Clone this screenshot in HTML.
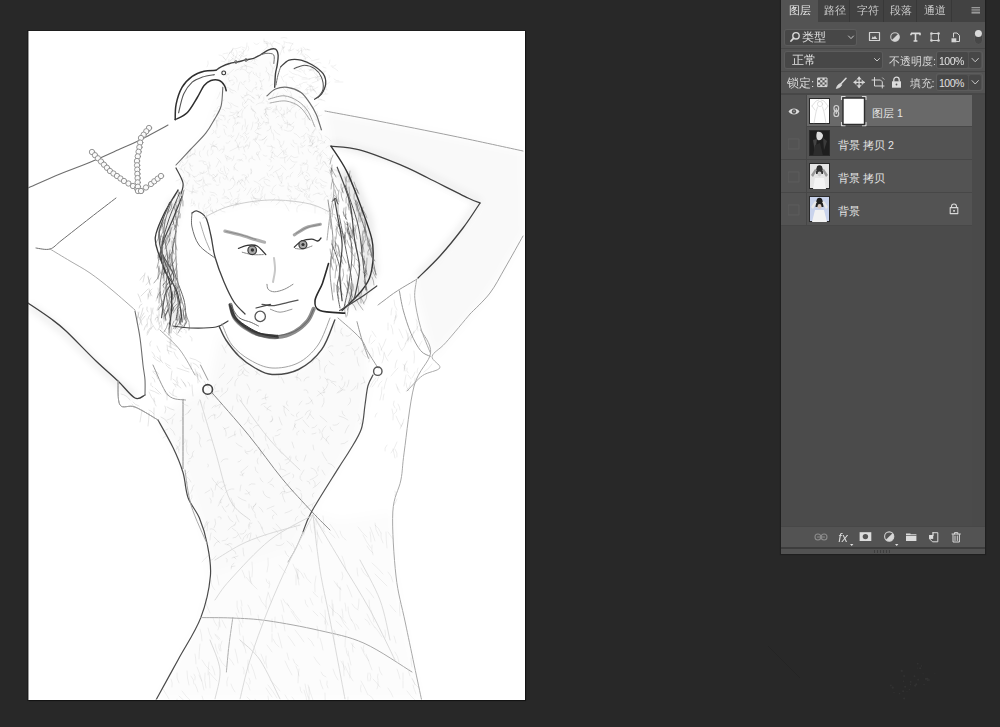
<!DOCTYPE html>
<html><head><meta charset="utf-8">
<style>
*{margin:0;padding:0;box-sizing:border-box}
html,body{width:1000px;height:727px;overflow:hidden;background:#282828;font-family:"Liberation Sans",sans-serif}
.a{position:absolute}
#canvas{left:28px;top:31px;width:496.5px;height:668.6px;background:#fff;box-shadow:0 0 0 1px rgba(0,0,0,.25),1px 1px 1px rgba(0,0,0,.35),inset 1px 0 0 rgba(0,0,0,.4)}
#panel{left:781px;top:0;width:204px;height:554.4px;background:#535353;box-shadow:0 0 1px 1px rgba(0,0,0,.22)}
.tabbar{left:0;top:0;width:204px;height:22px;background:#424242}
.tab{top:0;height:22px;font-size:10.5px;line-height:21px;padding-left:2px;color:#c8c8c8;text-align:center;border-right:1px solid #383838}
.tab.act{background:#535353;color:#e8e8e8;border-right:none;padding-left:0}
.field{background:#464646;border:1px solid #4c4c4c;border-radius:2px}
.txt{font-size:11px;color:#e0e0e0;white-space:nowrap;line-height:12px}
.ring{border-radius:3px;box-shadow:inset 0 0 0 1px #5c5c5c;background:#535353}
.inb{background:#474747;border-radius:2px}
.sep{left:0;width:204px;height:1px;background:#474747}
.row{left:0;width:191px;height:33px;background:#535353;border-bottom:1px solid #474747}
.row.sel{background:#696969}
.eyecol{left:0;top:0;width:26px;height:32px;background:#535353;border-right:1px solid #474747}
.thumb{left:28px;top:3px;width:21px;height:26px;border:1px solid #2a2a2a;background:#fff}
.lname{left:57px;top:11.5px;font-size:10.6px;color:#e6e6e6;white-space:nowrap;line-height:12px}
</style></head><body>
<div id="canvas" class="a"></div>
<svg class="a" style="left:0;top:0" width="1000" height="727" viewBox="0 0 1000 727">
<defs>
<clipPath id="cc"><rect x="28" y="31" width="496.5" height="668.6"/></clipPath>
<filter id="bl" x="-20%" y="-20%" width="140%" height="140%"><feGaussianBlur stdDeviation="5"/></filter>
<filter id="bl3" x="-20%" y="-20%" width="140%" height="140%"><feGaussianBlur stdDeviation="3"/></filter>
<filter id="sf" x="-5%" y="-5%" width="110%" height="110%"><feGaussianBlur stdDeviation="0.4"/></filter>
</defs>
<g clip-path="url(#cc)">
<g filter="url(#bl)" fill="#000">
  <path d="M176 165 L205 133 L222 87 L216 70 L245 60 L275 49 L278 56 L275 86 L300 92 L320 125 L331 146 L335 180 L335 215 L300 205 L250 203 L200 215 L186 195Z" opacity="0.012"/>
  <path d="M183 399 L208 389 L220 332 L240 356 L272 374 L298 369 L322 350 L335 320 L365 340 L368 390 L360 430 L338 468 L312 511 L290 550 L210 576 L207 544 L199 518 L183 468 L173 447 L158 420Z" opacity="0.02"/>
  <path d="M210 576 L290 550 L312 511 L340 520 L392 512 L396 576 L405 624 L421 699 L156 699 L178 659 L200 618Z" opacity="0.012"/>
  <path d="M325 111 L523 151 L525 232 L499 276 L483 300 L433 358 L413 280 L446 250 L481 204 L400 165 L331 146 Z" opacity="0.025"/>
</g>
<g filter="url(#bl3)" fill="none" stroke="#000">
  <path d="M30 306 L66 334 L96 364 L118 383 L135 396" stroke-width="7" opacity="0.06"/>
  <path d="M333 143 L390 158 L428 175 L478 201 L460 228 L440 253 L418 275" stroke-width="6" opacity="0.05"/>
  <path d="M176 200 L166 240 L170 290 L176 322" stroke-width="12" opacity="0.08"/>
  <path d="M345 170 L365 220 L370 270 L352 305" stroke-width="16" opacity="0.08"/>
</g>
<g fill="none" stroke-linecap="round" filter="url(#sf)" stroke="#000">
<path d="M227 74Q227 76 226 77 M245 61Q247 63 250 62 M268 115Q266 113 265 116 M222 73Q223 76 226 75 M205 146Q204 148 203 150 M209 162Q209 164 210 166 M248 99Q247 102 244 104 M267 136Q265 139 262 140 M242 175Q246 174 247 177 M282 176Q283 180 281 184 M287 148Q284 150 286 153 M288 156Q284 159 280 158 M237 160Q240 158 243 161 M215 114Q214 115 213 116 M263 196Q262 199 258 201 M242 109Q240 113 235 113 M213 130Q216 132 212 134 M243 110Q241 114 242 118 M258 152Q255 152 257 155 M300 194Q299 196 297 198 M192 154Q195 153 196 155 M315 151Q317 151 319 153 M234 69Q231 72 227 75 M253 63Q256 63 257 65 M260 73Q260 75 260 76 M332 192Q331 195 330 196 M203 177Q204 181 203 184 M211 184Q207 183 204 186 M306 172Q309 173 310 176 M220 92Q219 96 217 99 M275 198Q273 200 271 202 M281 200Q279 203 276 205 M204 180Q204 185 208 186 M239 116Q237 119 233 118 M320 183Q322 187 326 186 M281 107Q283 109 280 111 M330 157Q331 161 330 165 M315 186Q317 187 318 189 M214 146Q218 147 218 150 M249 146Q245 145 244 148 M256 137Q256 139 256 140 M251 169Q251 172 251 174 M264 179Q268 179 270 181 M220 177Q219 180 220 183 M273 133Q274 136 274 140 M261 128Q257 128 255 131 M188 160Q187 164 183 166 M290 159Q292 163 297 162 M211 207Q209 211 213 212 M245 135Q247 136 247 138 M264 122Q266 123 269 123 M257 60Q253 58 251 62 M182 178Q184 179 185 181 M321 185Q320 188 324 188 M267 165Q268 167 270 166 M244 61Q240 61 238 64 M189 191Q193 192 197 193 M230 141Q229 144 226 143 M260 89Q263 87 263 90 M224 175Q228 176 228 180 M293 140Q293 144 297 144 M193 185Q192 188 194 190 M239 133Q238 137 235 141 M308 166Q308 169 307 171 M187 172Q190 172 190 175 M310 194Q310 196 308 198 M223 125Q226 125 227 128 M329 210Q326 212 329 215 M225 108Q228 108 230 109 M256 82Q257 84 256 85 M224 88Q222 90 223 93 M281 168Q279 170 276 171 M291 156Q294 159 298 157 M276 171Q274 172 273 173 M256 188Q253 190 251 193 M318 162Q320 165 316 166 M193 188Q192 191 192 194 M284 130Q288 132 291 131 M256 138Q254 139 255 141 M218 170Q219 174 224 174 M255 113Q253 116 256 119 M274 156Q276 155 278 157 M294 100Q297 101 294 103 M219 161Q218 164 216 167 M258 126Q256 128 259 130 M208 211Q206 212 205 213 M247 94Q252 95 254 99 M268 73Q271 77 269 81 M306 133Q304 137 301 137 M319 130Q320 130 322 130 M248 99Q250 99 252 101 M295 188Q298 191 303 192 M235 114Q232 116 229 116 M244 95Q245 97 248 95 M221 204Q223 206 225 207 M328 196Q324 196 324 200 M326 140Q324 141 324 143 M248 174Q250 177 246 178 M251 106Q251 111 255 112 M217 158Q220 160 221 163 M209 199Q207 202 209 204 M217 144Q214 146 211 147 M242 136Q245 137 244 140 M220 210Q222 212 225 212 M240 123Q235 122 233 126 M289 198Q292 200 290 204 M238 203Q234 203 233 208 M291 156Q289 158 287 161 M182 179Q185 182 188 184 M224 70Q226 73 229 75 M259 146Q260 148 261 150 M278 196Q280 198 279 200 M329 166Q330 167 331 169 M283 119Q284 123 288 123 M230 119Q227 120 228 123 M294 133Q297 134 300 138 M211 175Q214 178 216 182 M242 159Q241 161 239 161 M210 211Q213 209 213 212 M239 198Q234 198 233 202 M205 204Q204 205 204 207 M236 111Q240 111 238 114 M220 107Q218 105 217 109 M307 185Q307 187 308 189 M235 202Q236 205 239 205 M305 176Q307 174 308 177 M295 198Q294 201 297 202 M274 93Q274 95 272 97 M322 154Q321 156 319 156 M216 120Q218 124 217 128 M304 172Q301 174 298 177 M228 102Q232 104 231 108 M207 174Q211 173 210 176 M264 103Q259 102 256 105 M289 123Q290 126 293 127 M283 173Q282 177 278 177 M266 111Q266 113 264 114 M317 145Q315 149 319 149 M257 87Q252 88 252 92 M306 189Q305 190 303 190 M331 146Q327 145 326 148 M247 92Q247 97 242 98 M271 152Q274 152 275 155 M271 157Q273 157 274 159 M226 83Q226 87 222 87 M263 155Q265 157 267 156 M241 96Q244 99 246 103 M266 108Q264 113 268 116 M234 82Q235 85 232 85 M306 116Q305 120 302 119 M278 200Q281 200 284 202 M256 73Q256 77 260 78 M326 211Q324 213 326 214 M238 199Q239 203 236 206 M240 189Q240 192 237 192 M240 135Q242 136 241 138 M291 198Q294 200 297 199 M195 149Q196 152 194 155 M243 146Q244 149 245 152 M274 130Q276 134 280 135 M249 79Q251 80 249 82 M244 64Q248 66 246 70 M277 63Q275 66 273 69 M198 191Q194 190 191 193 M207 212Q205 216 208 220 M202 180Q201 181 199 181 M256 202Q258 203 259 204 M325 162Q322 161 322 164 M277 109Q274 110 272 112 M239 181Q241 185 244 188 M233 176Q232 178 234 180 M184 185Q184 189 188 190 M269 159Q272 159 271 162 M200 151Q198 155 201 157 M212 146Q211 148 211 150 M252 71Q250 74 248 73 M191 155Q189 158 185 159 M279 142Q280 145 282 148 M325 171Q330 172 331 176 M261 116Q261 119 263 119 M208 150Q206 153 208 156 M317 179Q315 179 316 182 M294 126Q294 129 291 131 M295 164Q293 168 290 169 M264 121Q263 125 260 126 M211 195Q213 194 215 196 M295 103Q294 106 291 106 M320 154Q316 155 317 160 M251 188Q249 192 247 195 M291 144Q292 146 294 147 M193 203Q196 203 195 206 M183 164Q180 167 181 170 M234 185Q233 189 228 190 M314 201Q313 203 311 202 M311 184Q309 187 309 191 M192 175Q194 176 195 178 M221 168Q219 171 223 172 M256 190Q256 192 255 193 M245 177Q247 180 249 183 M210 192Q215 192 217 195 M254 181Q257 182 259 184 M210 165Q209 167 210 169 M189 180Q187 183 186 186 M233 116Q236 118 235 123 M319 132Q322 135 322 139 M249 137Q247 140 245 143 M231 103Q234 106 238 107 M246 177Q246 179 245 181 M288 189Q290 189 291 191 M228 136Q231 135 232 138 M331 170Q336 169 339 173 M302 171Q302 173 303 175 M239 180Q237 183 237 185 M250 73Q248 75 249 78 M267 173Q267 176 269 177 M316 177Q313 180 312 184 M278 124Q282 126 282 130 M243 179Q242 182 240 184 M243 125Q242 127 242 130 M280 178Q279 182 282 183 M202 179Q200 182 196 181 M267 139Q265 141 264 144 M308 136Q311 139 310 143 M285 114Q281 114 283 117 M220 115Q222 115 225 116 M287 107Q287 110 290 111 M325 136Q329 138 331 141 M299 183Q298 186 298 189 M212 209Q212 213 215 215 M306 127Q309 128 309 131 M309 108Q307 110 305 111 M216 120Q217 122 219 121 M224 129Q224 132 226 135 M234 203Q231 203 231 205 M320 179Q323 182 327 183 M327 158Q330 158 330 160 M213 178Q212 181 215 181 M318 150Q314 151 313 155 M301 188Q304 190 307 192 M294 122Q292 125 289 125 M254 59Q255 61 255 62 M255 139Q253 138 253 140 M250 142Q250 146 248 149 M188 155Q187 156 187 158 M285 204Q287 207 289 211 M253 198Q256 199 260 199 M230 192Q231 195 232 197 M245 119Q246 123 245 127 M308 116Q308 118 308 120 M331 158Q330 160 328 161 M224 146Q225 151 222 153 M291 196Q292 198 291 199 M323 150Q319 153 320 157 M273 151Q272 154 271 158 M282 125Q283 128 280 128 M182 178Q179 180 176 181 M307 180Q308 182 306 184 M243 102Q241 106 245 108 M305 145Q304 148 300 147 M238 147Q234 149 230 151 M242 66Q243 69 240 70 M179 168Q183 169 184 173 M184 177Q181 180 180 184 M189 153Q186 155 187 158 M216 209Q218 212 215 212 M279 185Q281 187 284 186 M202 192Q203 193 203 195 M267 122Q265 123 266 125 M234 156Q234 159 232 161 M301 143Q300 146 303 146 M288 186Q287 191 291 192 M308 149Q308 152 311 153 M236 163Q233 166 234 170 M218 119Q215 122 217 126 M305 193Q303 195 305 197 M304 163Q303 166 300 165 M264 181Q265 186 270 186 M213 150Q214 153 211 155 M217 174Q217 177 213 178 M304 177Q305 181 309 181 M317 136Q319 138 318 142 M287 109Q287 112 287 114 M193 154Q191 155 190 157 M231 135Q232 138 234 136 M314 130Q312 132 313 134 M298 185Q297 188 294 186 M265 194Q263 198 266 201 M239 69Q237 69 235 71 M282 114Q280 117 283 118 M232 199Q230 203 225 203 M301 167Q302 172 298 175 M199 174Q197 177 193 177 M270 175Q273 174 274 177 M199 161Q202 160 206 162 M211 204Q209 208 205 209 M247 65Q243 66 240 68 M248 105Q245 107 244 109 M185 167Q183 169 185 171 M218 117Q219 120 222 120 M229 77Q227 79 230 82 M252 97Q254 97 255 99 M222 198Q226 197 229 199 M304 106Q305 108 307 107 M260 80Q262 83 262 87 M267 72Q269 75 273 76 M190 150Q192 152 190 154 M273 166Q272 170 269 171 M186 171Q190 173 189 177 M305 105Q302 107 299 110 M252 194Q252 197 254 197 M234 76Q238 78 237 82 M259 123Q257 125 259 127 M306 193Q308 195 310 198 M315 207Q315 210 315 213 M216 185Q217 186 219 185 M271 145Q274 148 271 151 M314 168Q316 168 318 169 M256 95Q259 95 260 98 M270 192Q272 195 275 195 M202 186Q200 188 198 188 M310 136Q309 141 313 144 M230 89Q229 93 233 93 M304 201Q303 205 299 206 M243 154Q247 155 246 159 M245 133Q246 136 249 133 M299 205Q296 207 297 212 M278 93Q277 95 276 97 M323 152Q325 154 327 156 M225 156Q226 160 230 159 M258 94Q260 96 259 99 M223 116Q226 117 225 120 M263 188Q261 191 262 194 M208 167Q208 170 209 173 M251 101Q252 102 254 103 M237 146Q239 149 242 147 M214 141Q211 144 214 146 M223 177Q223 180 226 179 M238 122Q238 124 236 125 M329 172Q331 172 333 174 M283 151Q280 154 278 156 M293 172Q290 174 290 177 M289 201Q293 200 296 204 M298 146Q298 150 299 154 M242 179Q240 181 237 183 M248 125Q247 127 246 129 M264 113Q265 117 268 119 M255 123Q259 122 259 125 M267 146Q272 146 275 148 M310 188Q308 189 306 190 M255 202Q251 202 251 206 M258 135Q258 138 256 140 M271 107Q267 108 264 110 M240 142Q237 146 239 150 M253 122Q253 126 251 130 M260 184Q261 188 264 187 M307 134Q311 137 315 137 M257 133Q259 135 261 135 M272 108Q270 111 266 109 M241 180Q246 181 245 185 M224 189Q226 192 223 195 M255 141Q257 143 260 146 M241 69Q246 69 248 73 M259 186Q261 190 257 193 M227 168Q229 169 229 171 M192 199Q192 201 191 204 M318 146Q315 146 313 148 M324 191Q325 195 328 197 M224 149Q221 148 219 151 M215 114Q215 116 213 117 M315 129Q315 132 312 133 M233 80Q231 80 229 81 M237 116Q239 118 241 117 M232 90Q235 90 236 92 M182 159Q181 162 183 163 M246 188Q246 190 244 191 M291 112Q288 110 287 113 M256 87Q255 89 257 90 M217 198Q219 201 217 203 M273 84Q271 85 270 86 M262 94Q260 95 259 98 M266 101Q269 101 268 104 M265 109Q268 111 266 114 M225 87Q229 87 232 90 M240 200Q236 202 235 206 M181 162Q180 164 179 166 M281 165Q284 167 286 170 M194 201Q195 205 191 206 M225 155Q228 157 232 159 M290 91Q292 94 292 98 M299 97Q303 98 307 98 M194 180Q196 184 200 185 M190 164Q189 168 192 171 M324 164Q321 167 320 170 M287 120Q289 124 287 128 M288 183Q288 187 292 187 M277 139Q279 140 280 142 M241 82Q242 85 244 85 M283 88Q285 90 287 92 M224 196Q227 196 229 199 M306 140Q304 141 303 143 M271 126Q271 130 267 131 M222 109Q224 109 225 111 M207 165Q209 167 208 169 M251 109Q254 108 253 111 M334 174Q336 177 340 176 M266 67Q268 69 266 72 M322 156Q320 160 320 164 M299 188Q300 190 302 192 M310 203Q312 206 317 207 M294 103Q298 104 300 107 M235 140Q238 143 238 147 M276 185Q272 187 272 192 M255 132Q256 134 259 134 M189 163Q190 167 193 166 M246 81Q243 81 244 83 M312 180Q312 182 313 184 M258 119Q258 122 261 124 M307 199Q309 200 311 201 M266 107Q268 107 268 109 M320 193Q316 193 313 195 M284 150Q283 154 287 155 M252 156Q252 160 255 160 M284 123Q287 124 290 125 M268 118Q269 121 268 124 M318 140Q322 140 325 143 M216 130Q215 132 216 134 M270 62Q270 64 271 66 M313 140Q314 145 310 147 M334 169Q337 170 340 172 M203 208Q205 212 203 216 M214 111Q217 110 220 112 M224 166Q224 170 226 174 M315 142Q312 146 308 146 M295 106Q291 107 290 111 M272 66Q274 69 272 73 M323 161Q325 162 326 164 M309 146Q312 144 312 147 M264 97Q265 100 262 102 M315 138Q311 141 312 145 M315 182Q316 184 319 183 M284 114Q282 116 285 118 M239 194Q239 196 238 197 M210 197Q212 199 210 201 M233 127Q234 129 233 132 M283 94Q286 95 286 99 M266 137Q264 141 259 140 M265 177Q262 178 259 181 M277 109Q278 113 282 115 M325 162Q326 166 329 168 M257 154Q259 157 260 160 M253 110Q255 111 256 113 M314 124Q316 127 316 130 M224 100Q220 101 221 105 M230 202Q232 204 230 205 M233 178Q236 181 235 185 M253 198Q257 198 256 202 M240 82Q238 86 238 90 M207 171Q205 174 201 173 M305 194Q307 195 307 198 M261 194Q262 199 259 202 M228 173Q226 175 226 178 M276 105Q277 107 276 111 M323 143Q321 142 320 144 M291 104Q294 102 295 105 M305 119Q305 122 305 125 M281 149Q284 151 284 155 M289 176Q286 176 286 179 M220 136Q220 139 217 137 M252 158Q248 158 249 162 M212 175Q214 173 215 176 M264 79Q263 82 260 81 M204 171Q204 175 201 173 M277 106Q276 109 273 110 M279 116Q277 116 276 118 M241 202Q239 204 235 204 M245 87Q247 90 251 92 M210 144Q213 147 217 147 M218 174Q218 176 215 177 M253 197Q256 199 259 200 M248 145Q245 144 245 147 M233 178Q230 178 230 181 M203 162Q204 166 207 164 M290 195Q289 197 287 196 M302 163Q305 162 308 165 M244 66Q249 66 253 68 M253 72Q253 74 255 75 M200 172Q201 173 200 175 M255 202Q253 205 257 205 M316 170Q319 171 319 173 M257 117Q260 119 257 122 M285 157Q284 160 285 163 M332 194Q332 197 330 199 M238 113Q235 116 239 117 M273 112Q276 111 276 114 M310 179Q308 179 307 181 M228 156Q225 158 227 161 M312 134Q313 138 310 142 M276 172Q278 175 279 179 M260 151Q258 153 258 155 M262 86Q259 88 261 90 M251 169Q253 172 251 174 M199 203Q198 206 199 209 M203 185Q202 189 205 192 M318 193Q320 196 323 194 M304 136Q305 137 304 139 M247 128Q247 132 243 134 M284 110Q285 112 284 114 M230 112Q232 113 234 113 M290 95Q290 97 293 98 M191 155Q189 156 187 157 M302 152Q303 153 303 154 M234 167Q235 170 238 171 M305 107Q304 111 307 113 M206 210Q204 212 204 215 M296 112Q294 115 296 118 M270 126Q271 129 272 133 M251 197Q252 200 253 202 M307 160Q308 164 304 165 M284 141Q284 145 280 147 M190 174Q189 176 190 177 M311 91Q314 89 318 87 M317 117Q319 116 322 115 M289 77Q292 78 294 77 M303 93Q305 93 307 94 M319 77Q321 76 322 76 M294 90Q298 91 301 92 M316 73Q319 76 318 80 M292 78Q292 80 295 82 M316 98Q321 99 325 101 M309 79Q313 77 318 77 M322 73Q324 73 325 72 M323 87Q324 90 327 90 M310 70Q312 66 317 66 M318 79Q321 78 325 78 M304 70Q303 73 306 75 M325 85Q328 84 330 82 M312 88Q313 90 315 91 M302 79Q306 79 310 79 M305 95Q307 93 309 93 M324 82Q327 86 327 90 M292 89Q296 87 300 88 M315 79Q317 76 321 76 M305 90Q307 87 311 86 M308 69Q311 70 313 71 M309 71Q313 68 318 67 M299 70Q303 66 307 65 M301 84Q303 82 307 82 M281 76Q282 79 284 82 M283 77Q285 75 288 74 M315 106Q317 105 319 103 M307 105Q307 108 310 110 M296 86Q299 86 300 84 M310 70Q312 69 314 70 M286 82Q286 87 288 91 M315 119Q318 121 320 125 M312 83Q316 82 321 79 M313 69Q314 74 318 77 M313 114Q315 117 317 120 M317 111Q317 114 319 116 M315 76Q317 78 318 81 M298 75Q302 78 307 78 M311 85Q313 89 316 92 M296 66Q300 68 303 71 M300 61Q304 59 308 57 M306 90Q308 89 311 90 M318 100Q320 99 322 100 M311 89Q315 90 317 94 M317 72Q322 71 326 71 M317 71Q319 70 321 72 M323 90Q325 91 326 94 M319 93Q323 95 328 94 M307 89Q307 92 308 94 M307 84Q310 87 314 87 M300 84Q300 86 301 87 M310 96Q313 99 318 98 M312 109Q314 106 317 105 M304 63Q308 64 313 64 M310 85Q310 89 311 92 M289 71Q292 74 297 75 M293 69Q297 70 301 72 M230 52Q230 54 228 55 M264 41Q267 41 269 43 M247 43Q247 46 246 49 M242 55Q241 58 239 60 M290 49Q288 50 289 52 M305 54Q309 56 311 59 M223 54Q226 53 228 53 M288 50Q291 52 294 49 M242 47Q243 48 245 48 M290 43Q292 43 293 44 M314 65Q317 61 321 63 M284 47Q281 50 280 55 M270 42Q271 46 274 48 M231 57Q232 59 234 59 M232 50Q230 54 234 56 M329 75Q331 77 329 78 M241 55Q243 58 247 55 M229 55Q227 58 225 61 M233 49Q237 49 241 47 M311 61Q315 60 319 59 M233 48Q233 52 230 53 M285 42Q287 43 290 43 M264 39Q264 40 264 42 M301 48Q302 52 302 55 M236 57Q234 60 234 64 M274 41Q271 44 272 48 M267 42Q267 44 267 46 M219 55Q223 55 225 59 M239 52Q242 51 243 54 M242 49Q244 49 244 51 M229 59Q227 62 229 66 M307 49Q308 50 310 50 M233 49Q231 51 229 54 M299 52Q300 49 302 51 M254 43Q257 46 259 43 M298 50Q300 53 297 54 M296 50Q298 52 299 49 M282 47Q284 49 285 47 M239 55Q241 56 241 58 M235 56Q237 58 240 60 M264 41Q268 43 268 47 M221 61Q223 61 225 62 M331 66Q334 67 336 65 M335 82Q339 82 343 82 M330 60Q330 62 329 64 M248 46Q250 49 248 51 M208 61Q209 64 207 67 M293 43Q290 46 290 51 M264 43Q268 44 271 44 M267 47Q265 50 263 51 M244 51Q242 54 239 56 M274 41Q277 43 280 44 M282 45Q284 47 282 49 M233 58Q231 61 228 63 M304 55Q307 58 305 62 M223 57Q224 59 226 60 M332 67Q335 68 338 71 M229 61Q231 59 235 60 M246 49Q243 51 243 55 M323 67Q325 68 326 68 M303 50Q304 48 306 50 M236 50Q239 54 235 58 M303 54Q302 57 305 57 M281 38Q284 37 287 38 M302 48Q303 52 300 55 M284 46Q282 49 284 53 M284 41Q285 43 284 45 M303 47Q305 50 309 50 M233 52Q235 54 233 57 M334 79Q336 81 339 81" stroke-width="0.6" opacity="0.10"/>
<path d="M255 371Q257 373 260 375 M234 503Q236 508 233 512 M173 419Q172 422 172 424 M205 401Q203 405 204 409 M236 434Q232 436 228 438 M180 437Q181 440 178 441 M185 439Q186 443 183 444 M218 517Q222 516 221 519 M192 456Q192 459 189 459 M319 429Q321 431 320 433 M362 350Q362 355 366 357 M348 441Q345 444 341 444 M256 503Q256 506 253 507 M359 347Q358 350 355 351 M212 440Q209 439 207 441 M225 364Q225 368 222 369 M246 530Q245 535 240 534 M318 475Q315 478 310 480 M214 414Q215 416 215 419 M349 425Q346 429 345 433 M209 555Q205 558 202 562 M211 488Q214 492 213 497 M271 406Q268 406 267 410 M314 493Q311 494 313 497 M273 437Q273 441 276 445 M341 375Q344 377 342 380 M325 378Q326 380 328 380 M200 438Q198 443 201 447 M223 482Q219 481 217 485 M312 400Q310 404 306 404 M281 532Q281 536 281 539 M202 413Q202 418 204 422 M249 504Q249 506 249 508 M233 377Q231 381 227 384 M249 417Q248 422 244 425 M221 404Q220 406 219 408 M263 491Q264 497 270 498 M276 524Q279 527 282 531 M234 557Q235 558 236 559 M188 482Q185 483 184 486 M212 391Q213 394 213 397 M229 504Q229 506 226 507 M285 551Q286 555 289 557 M315 502Q312 503 312 507 M352 333Q350 337 346 336 M255 484Q251 483 249 485 M192 425Q193 428 190 430 M199 401Q198 403 198 405 M257 371Q258 373 256 375 M361 423Q363 426 363 429 M303 420Q306 424 309 427 M311 411Q310 415 307 419 M249 396Q247 400 247 404 M357 357Q357 362 359 366 M282 493Q283 498 285 502 M243 367Q245 371 249 373 M259 447Q261 451 261 456 M292 442Q293 445 294 448 M323 387Q325 389 324 393 M216 405Q213 406 212 408 M312 504Q308 506 304 509 M352 343Q350 346 346 346 M307 481Q310 481 310 484 M286 492Q282 490 280 494 M249 420Q248 424 252 424 M190 410Q189 411 188 413 M250 522Q247 525 249 529 M284 406Q283 411 286 416 M238 497Q242 500 246 501 M326 426Q323 428 322 432 M287 401Q285 404 288 406 M302 401Q300 403 299 405 M261 390Q258 389 257 392 M317 358Q313 359 312 363 M281 429Q279 429 277 431 M251 506Q252 510 255 513 M178 446Q176 448 176 450 M216 415Q211 414 208 419 M248 466Q245 469 241 472 M339 423Q337 426 333 425 M315 357Q312 357 313 360 M272 510Q275 512 277 515 M210 529Q214 528 216 532 M256 504Q253 505 253 509 M329 351Q332 353 333 356 M258 521Q261 524 262 529 M290 456Q289 460 285 460 M301 511Q301 514 305 516 M192 495Q193 498 190 501 M187 440Q187 443 186 446 M274 515Q271 516 273 519 M235 566Q233 566 231 567 M361 419Q363 422 360 424 M218 481Q215 485 215 490 M234 563Q231 565 231 569 M299 412Q295 414 297 417 M168 429Q166 430 163 431 M333 346Q329 345 328 348 M266 403Q263 403 261 405 M364 348Q364 352 361 352 M234 489Q229 488 225 493 M289 487Q291 490 294 493 M233 550Q236 551 236 554 M189 471Q188 472 186 474 M279 463Q282 467 280 470 M170 428Q174 431 175 435 M331 382Q334 383 336 386 M228 516Q229 520 233 522 M253 449Q251 452 246 452 M228 343Q227 346 225 348 M222 403Q219 405 215 407 M264 406Q267 409 271 411 M299 431Q296 432 297 435 M242 371Q243 376 248 376 M228 388Q228 391 226 392 M303 430Q304 432 305 433 M179 449Q178 451 179 453 M262 527Q262 532 266 536 M302 499Q303 504 299 508 M182 402Q184 405 188 406 M231 498Q233 502 233 506 M182 417Q184 420 180 421 M232 544Q229 542 227 545 M267 444Q268 446 269 449 M281 377Q283 380 284 383 M246 490Q249 492 250 495 M322 452Q324 457 327 461 M237 394Q236 399 238 402 M259 507Q262 509 263 512 M222 412Q221 416 217 418 M207 521Q205 524 204 528 M304 390Q308 389 308 393 M327 379Q326 381 328 383 M313 445Q313 447 314 450 M250 428Q254 432 254 437 M228 538Q226 541 222 541 M320 416Q324 419 327 422 M241 472Q243 474 243 476 M236 515Q237 519 239 522 M300 476Q299 479 302 481 M349 380Q349 383 347 387 M293 474Q295 476 293 478 M223 427Q227 430 226 436 M365 382Q363 383 361 384 M215 519Q217 524 214 528 M238 378Q234 381 235 386 M273 419Q273 422 270 422 M316 433Q314 434 312 434 M235 431Q234 433 235 436 M194 451Q191 453 193 457 M233 406Q233 410 231 412 M296 456Q295 460 298 461 M229 427Q227 428 224 429 M192 490Q191 493 189 495 M207 522Q208 527 207 531 M301 493Q303 496 301 499 M194 485Q192 487 192 490 M187 477Q190 479 191 482 M260 478Q261 481 263 482 M273 478Q271 482 268 483 M251 533Q251 537 249 541 M214 537Q217 540 220 543 M250 533Q247 534 247 538 M219 391Q214 391 211 395 M325 392Q321 392 317 396 M287 541Q290 543 292 546 M323 437Q327 440 329 444 M210 498Q212 500 211 503 M358 414Q361 418 358 421 M342 411Q342 415 345 416 M296 424Q293 426 296 428 M257 450Q254 450 254 453 M232 528Q234 530 236 531 M259 416Q259 419 258 421 M211 533Q210 536 210 540 M219 541Q215 542 214 546 M250 492Q248 495 245 494 M245 450Q245 454 248 454 M239 358Q243 360 244 364 M258 458Q256 461 258 464 M319 466Q317 468 318 471 M222 506Q224 510 226 512 M236 443Q239 446 242 447 M190 461Q187 461 188 464 M341 333Q343 334 343 336 M176 445Q178 447 179 450 M236 522Q236 525 234 525 M317 425Q315 428 312 428 M266 433Q264 437 266 441 M243 548Q243 552 244 556 M255 467Q255 471 258 473 M175 414Q172 419 167 420 M290 482Q288 486 285 486 M221 502Q219 504 218 506 M296 488Q299 489 301 491 M283 406Q287 408 289 411 M324 398Q325 403 322 407 M310 414Q312 417 314 419 M268 397Q265 398 262 399 M226 485Q222 486 221 489 M167 435Q165 437 163 438 M318 391Q321 393 323 396 M208 464Q209 465 208 467 M350 398Q352 402 348 405 M352 348Q356 351 355 355 M237 352Q239 354 237 356 M330 427Q330 430 333 431 M244 473Q243 476 240 475 M304 470Q302 473 301 475 M197 432Q200 435 200 438 M216 484Q219 487 223 490 M265 449Q264 452 261 454 M345 390Q340 389 337 393 M356 386Q354 390 351 391 M328 463Q333 464 335 468 M212 478Q213 481 216 483 M180 442Q181 446 177 449 M240 429Q240 433 242 436 M295 423Q295 427 293 430 M256 535Q257 539 260 542 M343 389Q341 392 338 393 M235 525Q231 526 228 530 M277 374Q280 376 279 378 M309 377Q305 377 304 381 M222 388Q222 390 222 392 M339 416Q344 417 348 420 M280 449Q279 453 283 454 M344 352Q342 352 341 354 M273 528Q277 530 278 533 M242 369Q238 371 238 375 M290 473Q286 475 282 477 M226 558Q228 559 227 562 M294 490Q290 492 286 493 M255 514Q255 517 256 518 M328 384Q327 389 323 391 M187 446Q185 452 189 455 M252 523Q248 524 250 527 M259 425Q255 425 253 428 M322 470Q323 472 325 475 M241 485Q240 488 240 491 M247 534Q243 537 242 542 M281 469Q284 469 286 471 M272 416Q274 419 271 422 M284 543Q281 547 276 545 M216 556Q214 560 209 561 M279 417Q280 421 282 425 M228 459Q223 458 221 462 M274 506Q271 507 267 509 M291 457Q291 462 286 464 M225 544Q230 544 232 549 M294 525Q297 527 297 530 M306 455Q305 458 304 461 M358 383Q358 386 357 389 M327 365Q323 368 325 373 M241 460Q240 462 238 462 M222 499Q219 501 221 503 M328 379Q331 382 336 382 M320 482Q317 486 313 488 M224 495Q221 499 219 503 M216 384Q213 386 215 389 M345 382Q345 387 341 389 M222 345Q224 349 226 353 M329 361Q330 364 334 365 M210 490Q207 492 205 493 M209 522Q206 525 204 529 M239 395Q242 398 242 402 M226 392Q223 394 220 397 M238 556Q235 557 232 558 M339 386Q340 387 341 389 M319 360Q320 365 320 370 M238 535Q237 538 233 538 M292 510Q289 512 285 513 M266 394Q264 397 266 400 M292 543Q296 548 294 553 M237 532Q239 535 241 539 M244 370Q243 375 238 376 M363 377Q364 380 365 383 M291 414Q292 415 294 416 M280 434Q278 436 275 436 M246 364Q242 365 239 367 M247 384Q249 387 250 390 M191 409Q189 413 185 415 M322 433Q324 437 321 440 M303 417Q299 420 295 421 M295 377Q300 377 301 381 M313 480Q316 482 315 486 M329 436Q326 437 326 441 M283 487Q286 491 284 494 M270 484Q273 484 274 487 M335 323Q334 328 335 332 M309 397Q312 400 313 404 M310 410Q306 411 305 415 M342 328Q340 330 341 333 M224 373Q221 375 219 378 M320 376Q321 378 320 379 M298 516Q295 518 295 521 M298 373Q296 376 297 380 M200 400Q201 401 201 403 M311 468Q316 469 317 474 M316 358Q318 359 320 361" stroke-width="0.6" opacity="0.12"/>
<path d="M228 677Q226 682 227 686 M340 616Q343 624 349 630 M270 680Q276 685 280 691 M222 620Q224 624 226 628 M361 647Q364 655 369 661 M305 600Q305 604 308 607 M317 530Q319 537 317 545 M342 556Q345 563 346 570 M288 636Q292 641 295 646 M202 660Q205 666 210 670 M359 599Q359 604 358 609 M412 679Q414 684 419 688 M187 671Q187 678 189 685 M182 691Q186 697 192 702 M240 640Q245 645 246 653 M369 600Q369 604 370 609 M177 673Q176 678 179 683 M407 691Q411 697 416 701 M317 514Q316 519 316 525 M372 563Q378 568 383 574 M394 636Q395 639 396 643 M409 669Q408 672 410 676 M287 603Q289 609 294 612 M191 676Q194 679 194 684 M278 633Q280 640 282 648 M292 697Q294 699 295 702 M400 602Q399 609 400 616 M357 568Q357 572 358 576 M314 657Q316 661 320 665 M369 695Q373 697 374 701 M348 651Q349 658 351 665 M305 684Q306 691 308 697 M287 653Q288 657 289 660 M268 592Q270 597 271 602 M269 581Q271 584 269 588 M347 585Q350 591 352 597 M388 688Q391 692 393 697 M171 679Q173 683 172 687 M341 661Q344 665 345 670 M368 673Q367 677 368 681 M332 600Q332 608 333 616 M268 558Q269 565 267 572 M217 575Q218 580 219 585 M372 545Q371 550 373 555 M317 532Q319 538 322 543 M320 680Q321 685 323 689 M229 658Q232 661 234 665 M261 654Q263 659 265 664 M361 681Q365 688 368 695 M337 583Q337 587 341 589 M251 642Q255 647 256 653 M337 613Q342 618 346 623 M212 666Q214 670 215 675 M248 660Q247 667 249 673 M329 532Q333 535 335 538 M296 666Q298 670 299 676 M381 533Q380 538 383 543 M209 662Q208 669 208 675 M179 696Q184 700 188 705 M200 629Q202 635 202 641 M388 532Q390 535 393 539 M282 615Q284 623 285 631 M363 535Q366 542 371 548 M366 588Q371 593 374 598 M258 615Q258 620 261 625 M403 673Q403 681 403 688 M365 619Q369 621 370 625 M388 572Q392 576 393 582 M343 661Q344 668 344 676 M195 654Q196 659 196 664 M197 667Q200 674 202 681 M241 607Q243 615 243 623 M340 587Q340 594 340 601 M252 562Q253 570 252 577 M371 610Q373 616 374 622 M304 528Q305 531 304 535 M334 631Q333 638 335 645 M219 657Q221 663 226 667 M395 652Q398 656 399 662 M411 658Q411 663 412 667 M285 661Q288 668 292 675 M275 617Q274 623 276 628 M345 603Q346 607 346 611 M345 666Q348 674 353 681 M397 669Q399 674 400 679 M316 576Q314 584 315 592 M375 525Q379 528 381 533 M268 696Q270 704 269 713 M296 568Q297 573 298 579 M235 649Q237 656 238 663 M279 565Q282 569 286 573 M205 673Q204 680 206 688 M228 650Q230 653 227 657 M250 577Q249 580 252 584 M246 682Q249 685 250 690 M375 523Q375 530 379 536 M255 699Q258 706 260 714 M163 689Q166 694 169 699 M309 687Q310 694 308 702 M266 688Q269 693 272 697 M219 644Q218 648 220 651 M177 699Q176 704 178 709 M413 685Q414 689 416 694 M333 669Q335 676 338 680 M209 672Q213 677 217 681 M195 684Q197 688 198 692 M313 592Q315 595 318 597 M370 673Q372 677 370 681 M356 624Q358 626 359 629 M219 622Q220 626 218 630 M340 531Q341 537 346 540 M242 570Q244 574 245 578 M342 572Q344 576 342 580 M322 596Q321 600 322 603 M334 581Q337 586 341 590 M281 600Q283 606 284 612 M205 598Q206 606 210 613 M304 573Q306 579 311 583 M222 641Q219 646 221 651 M272 634Q272 638 272 642 M237 601Q236 607 239 613 M295 630Q300 636 304 642 M320 613Q326 618 328 625 M390 605Q393 609 396 612 M370 532Q371 537 371 542 M268 593Q265 601 266 609 M351 643Q352 646 355 648 M334 630Q335 634 339 637 M246 577Q251 584 257 589 M348 663Q351 670 350 678 M379 667Q379 671 382 675 M266 656Q265 662 267 668 M361 685Q360 689 361 692 M247 697Q251 700 254 705 M342 609Q343 614 343 618 M353 643Q352 648 353 652 M351 619Q355 624 356 630 M346 648Q346 653 348 656 M375 627Q379 632 382 637 M385 630Q386 634 385 638 M236 613Q239 620 242 627 M325 621Q327 626 326 631 M215 635Q217 637 219 640 M266 579Q266 582 269 584 M352 604Q354 608 358 610 M373 679Q377 683 380 687 M320 638Q322 644 323 650 M378 674Q377 677 378 680 M209 673Q210 680 210 688 M308 638Q312 641 314 646 M367 546Q369 550 373 553 M325 610Q326 617 325 624 M298 543Q301 545 302 549 M249 678Q251 681 250 684 M313 611Q315 613 318 616 M315 526Q315 530 316 535 M296 575Q296 580 296 585 M299 669Q298 676 298 683 M346 631Q345 639 345 647 M213 618Q214 622 217 626 M215 644Q216 650 218 654 M348 697Q348 704 347 712 M333 604Q334 610 333 615 M297 569Q302 572 304 578 M248 605Q251 609 251 615 M249 571Q249 577 251 582 M211 580Q211 586 215 590 M272 619Q272 626 272 632 M375 574Q381 580 387 586 M310 524Q310 529 312 533 M231 684Q232 688 235 692 M285 695Q287 699 290 702 M364 645Q362 649 364 652 M251 664Q254 671 256 679 M199 675Q203 682 204 690 M283 599Q285 604 289 606 M348 607Q348 615 352 621 M314 520Q315 524 314 528 M310 598Q311 601 313 605 M298 569Q297 577 299 585 M259 596Q261 602 266 607 M412 678Q414 681 415 685 M293 659Q294 664 298 666 M268 685Q273 691 277 698 M293 612Q297 617 301 622 M243 667Q245 670 244 674 M325 693Q326 701 324 708 M366 654Q369 662 372 670 M321 672Q322 676 326 677 M386 532Q386 540 387 548 M317 626Q319 632 318 638 M215 634Q218 636 220 639 M367 614Q370 621 375 628 M219 617Q220 622 220 627 M309 697Q310 701 311 704 M241 600Q242 603 242 606 M239 624Q239 629 240 635 M291 611Q295 617 299 623 M378 681Q379 685 377 689 M323 516Q324 522 324 529 M273 639Q275 644 279 647 M336 621Q340 624 342 627 M308 685Q310 692 313 700 M293 564Q296 571 299 579 M208 628Q209 634 212 639 M358 527Q362 533 367 537 M329 605Q332 610 336 613 M316 519Q320 526 325 532 M200 644Q199 652 199 659 M370 527Q373 534 375 541 M194 674Q196 676 195 680 M304 690Q307 697 307 705 M309 545Q311 548 312 552 M327 681Q326 685 328 688 M300 687Q300 691 302 693 M202 696Q204 703 207 711 M243 636Q244 641 244 646 M267 645Q270 649 272 652 M330 524Q335 530 339 538 M361 568Q363 574 368 577" stroke-width="0.6" opacity="0.10"/>
<path d="M181 379Q184 383 186 387 M195 373Q197 377 200 382 M153 371Q157 371 159 374 M177 328Q176 332 177 335 M177 377Q176 380 178 383 M167 394Q167 397 167 400 M151 319Q151 324 151 329 M167 407Q170 409 174 410 M166 365Q168 368 171 369 M149 413Q149 419 148 426 M150 319Q152 325 156 330 M151 341Q149 343 150 346 M204 381Q206 385 209 388 M165 406Q167 409 165 413 M188 382Q190 384 190 386 M161 417Q165 418 168 423 M169 392Q172 396 177 397 M203 389Q205 395 208 399 M175 384Q178 385 181 388 M147 319Q148 323 147 327 M195 369Q196 373 198 377 M165 363Q168 365 170 366 M190 358Q196 359 201 363 M176 327Q179 330 182 332 M157 357Q161 360 163 363 M150 390Q154 391 159 394 M157 346Q158 349 160 352 M155 388Q158 391 161 394 M183 382Q185 383 186 386 M149 410Q152 411 154 414 M170 338Q171 343 171 348 M173 383Q175 384 176 387 M152 352Q154 354 155 357 M173 379Q177 381 178 385 M167 341Q172 344 177 347 M170 341Q170 344 170 347 M168 346Q172 348 176 350 M190 336Q193 338 192 341 M182 365Q185 369 189 369 M153 372Q157 374 158 379 M197 374Q201 376 202 379 M152 377Q155 379 155 382 M184 329Q187 330 186 333 M177 368Q183 370 189 372 M193 363Q197 364 199 368 M170 335Q170 338 172 341 M174 389Q172 392 173 395 M154 408Q154 414 154 419 M142 410Q141 416 140 422 M192 385Q192 390 193 396 M154 398Q153 402 156 406 M160 322Q158 324 160 327 M138 326Q139 330 140 335 M172 371Q171 376 171 380 M160 356Q160 359 161 361 M167 350Q169 351 172 352 M191 363Q191 366 191 369 M164 390Q165 394 168 396 M153 357Q156 360 160 362 M151 383Q150 386 153 387 M132 404Q134 405 134 408 M164 330Q168 334 172 338 M167 345Q167 350 169 354 M173 331Q176 335 181 337 M197 372Q198 377 198 383 M174 352Q175 356 178 359 M133 402Q135 405 139 406 M121 394Q127 395 130 400 M149 392Q151 398 155 402 M199 373Q201 375 201 378" stroke-width="0.7" opacity="0.14"/>
<path d="M177 222Q175 226 174 230 M175 209Q177 214 175 220 M177 264Q176 268 175 271 M172 292Q173 296 173 300 M176 225Q174 229 176 232 M168 310Q166 313 165 316 M177 205Q176 209 175 214 M165 314Q163 316 164 319 M180 307Q177 309 177 311 M164 299Q161 302 161 307 M183 325Q180 329 178 333 M172 259Q171 262 173 266 M175 281Q174 285 177 288 M162 254Q162 257 163 260 M183 308Q184 314 183 320 M171 319Q171 325 169 329 M179 216Q177 219 176 223 M159 234Q159 239 156 243 M163 255Q164 257 165 259 M160 292Q158 295 157 298 M169 323Q170 329 169 335 M170 233Q167 238 166 244 M176 297Q176 302 172 306 M172 227Q171 230 170 234 M174 270Q173 273 170 276 M185 315Q184 319 186 322 M185 323Q185 327 181 329 M164 258Q165 261 165 265 M179 211Q181 214 180 218 M183 310Q183 315 185 320 M181 196Q184 201 183 206 M163 255Q163 261 164 266 M176 257Q175 261 172 265 M173 219Q173 224 175 227 M173 269Q172 273 171 277 M179 310Q177 315 177 320 M159 225Q159 229 159 233 M179 316Q178 321 181 325 M168 309Q168 313 165 316 M167 253Q164 258 163 264 M162 236Q164 240 163 245 M164 283Q162 286 164 288 M181 309Q181 313 181 316 M170 323Q172 328 171 333 M161 223Q164 227 163 232 M168 300Q169 305 170 310 M165 219Q164 224 160 228 M180 195Q179 198 179 202 M177 284Q177 290 180 295 M168 261Q165 266 164 272 M173 295Q172 297 172 299 M169 236Q170 239 169 242 M181 310Q182 316 180 322 M173 291Q173 295 170 298 M159 268Q158 273 158 279 M176 216Q176 221 178 226 M172 294Q172 301 169 306 M182 192Q183 197 180 200 M170 281Q168 283 167 285 M186 318Q188 321 186 324 M163 247Q160 253 158 258 M178 190Q179 193 178 195 M165 262Q167 264 165 266 M158 255Q160 261 157 268 M174 321Q173 323 172 326 M168 323Q167 328 164 332 M170 262Q172 266 170 271 M170 324Q168 328 169 333 M168 287Q171 291 169 296 M167 290Q170 296 170 302 M177 304Q173 307 172 311 M178 296Q178 298 178 301 M176 283Q175 288 177 293 M164 301Q161 306 158 310 M170 254Q171 256 170 259 M168 309Q165 314 165 321 M164 267Q165 272 163 278 M170 264Q167 269 163 274 M173 267Q174 272 174 277 M182 315Q180 320 179 325 M160 252Q158 256 161 258 M168 208Q168 211 168 213 M163 220Q163 226 160 231 M172 247Q173 251 174 254 M167 305Q165 310 162 315 M172 305Q175 308 173 311 M172 252Q169 257 166 262 M172 204Q172 209 169 212 M162 255Q161 258 159 260 M163 232Q161 234 161 237 M186 322Q185 325 184 327 M164 290Q164 293 162 295 M189 323Q190 326 189 330 M177 271Q176 276 175 281 M166 281Q165 283 163 285 M160 292Q159 297 159 303 M176 323Q176 326 173 329 M178 319Q176 324 175 329 M159 266Q158 269 160 273 M177 292Q175 295 173 299 M170 239Q168 244 165 249 M166 293Q163 295 164 298 M170 227Q170 232 170 236 M177 288Q174 291 174 295 M173 221Q175 224 172 225 M173 263Q169 267 168 272 M179 314Q180 320 181 325 M169 261Q168 263 167 266 M175 288Q174 292 175 297 M168 283Q166 286 165 289 M172 304Q172 307 172 311 M178 211Q175 214 173 218 M168 268Q169 274 171 280 M164 236Q163 239 162 242 M164 267Q162 271 162 275 M177 201Q175 205 174 209 M178 191Q176 194 174 198 M172 241Q172 246 173 251 M165 269Q163 275 164 281 M161 250Q160 255 161 260 M159 232Q160 236 160 240 M180 322Q178 324 176 328 M160 273Q158 279 154 283 M179 294Q182 298 181 303 M181 298Q180 300 181 303 M168 235Q166 241 162 246 M170 250Q168 255 170 261 M171 306Q170 310 171 314 M180 303Q176 308 173 313 M173 238Q176 244 177 250" stroke-width="0.8" opacity="0.4"/>
<path d="M347 275Q347 281 348 286 M334 283Q334 288 334 292 M353 226Q353 232 352 238 M362 208Q360 215 360 222 M348 204Q351 209 351 214 M356 299Q359 305 363 310 M365 270Q364 274 366 276 M372 265Q374 269 376 274 M347 227Q348 234 350 240 M339 273Q340 278 341 283 M363 207Q362 212 362 216 M355 253Q355 259 354 266 M365 283Q367 287 367 292 M346 214Q344 216 346 219 M368 238Q367 242 368 246 M354 182Q356 188 359 194 M351 252Q353 254 354 256 M356 200Q359 205 360 210 M366 270Q365 273 367 275 M356 242Q355 247 357 252 M360 213Q358 220 357 226 M330 249Q330 254 333 259 M336 285Q339 288 339 292 M335 190Q337 197 337 203 M344 208Q343 212 344 216 M358 265Q359 268 360 270 M334 204Q332 210 332 217 M361 242Q362 248 362 253 M349 284Q350 288 352 292 M351 212Q351 217 354 220 M339 225Q340 230 343 234 M336 226Q337 231 340 236 M341 184Q340 188 343 192 M372 277Q374 281 374 285 M352 303Q355 306 356 310 M363 231Q362 236 362 242 M343 187Q341 190 343 193 M365 227Q365 230 366 233 M335 259Q336 265 337 271 M345 235Q345 239 346 244 M364 281Q366 286 367 290 M338 287Q337 293 339 299 M360 297Q363 300 364 304 M331 168Q334 173 336 177 M355 188Q358 189 358 193 M349 174Q349 177 351 180 M334 253Q332 258 334 263 M337 265Q335 271 335 278 M351 230Q351 235 350 239 M332 180Q335 185 338 191 M347 307Q349 311 347 316 M348 194Q345 198 346 203 M368 244Q370 250 372 256 M348 260Q350 266 348 271 M363 272Q366 274 366 277 M351 176Q350 182 353 186 M331 256Q330 261 331 267 M369 249Q367 252 368 255 M338 252Q341 258 343 264 M353 229Q351 233 352 237 M365 240Q362 246 362 253 M341 253Q344 258 346 263 M349 282Q348 288 347 293 M332 165Q331 169 332 172 M348 262Q349 265 350 268 M337 224Q341 229 343 234 M360 252Q362 257 365 262 M353 284Q354 287 353 291 M353 231Q355 233 354 236 M344 221Q344 224 347 225 M345 232Q344 237 345 242 M332 168Q331 171 332 174 M333 155Q331 159 330 164 M346 207Q345 213 346 219 M339 222Q339 225 337 229 M331 260Q331 265 333 270 M335 245Q336 251 338 256 M350 171Q349 177 349 182 M342 260Q340 263 341 267 M345 304Q344 311 346 317 M352 243Q350 247 351 252 M340 232Q343 234 343 238 M332 240Q331 244 333 249 M356 259Q360 261 360 266 M338 286Q341 291 343 295 M362 290Q360 296 361 303 M346 232Q344 235 345 238 M362 244Q364 248 364 252 M364 219Q366 226 364 232 M339 280Q342 283 341 287 M351 245Q353 247 353 249 M372 270Q374 274 376 278 M347 229Q348 234 351 237 M347 240Q348 244 350 248 M347 176Q345 179 347 182 M335 237Q335 242 336 246 M333 179Q331 184 331 189 M349 199Q347 205 349 210 M338 203Q338 209 338 216 M339 190Q337 196 339 202 M364 227Q366 229 366 232 M366 222Q365 228 364 234 M349 234Q354 239 356 245 M348 223Q349 226 351 229 M341 192Q341 197 343 201 M335 241Q336 244 335 248 M351 292Q353 297 351 302 M347 281Q348 285 349 289 M332 253Q332 256 332 259 M355 203Q357 207 357 211 M374 260Q373 264 372 268 M348 289Q350 294 351 300 M356 190Q353 194 354 199 M357 202Q357 209 359 216 M370 239Q368 243 370 246 M361 253Q363 259 365 264 M367 258Q367 264 366 269 M362 218Q361 221 363 223 M370 244Q373 250 372 256 M349 187Q349 191 350 196 M345 224Q345 228 346 231 M334 195Q337 198 338 201 M343 269Q345 275 342 281 M358 286Q359 292 359 297 M347 228Q347 231 348 234 M370 254Q372 258 375 261 M336 229Q337 234 336 239 M338 245Q340 251 340 257 M364 261Q366 268 367 274 M352 264Q356 269 358 276 M336 243Q339 247 339 252 M365 268Q367 271 365 274 M364 236Q363 242 362 248 M364 256Q364 261 364 265 M367 294Q367 299 364 303 M354 227Q356 232 357 239 M344 283Q347 288 348 293 M350 223Q350 230 354 235 M331 219Q329 224 331 229 M343 212Q344 216 347 220 M345 177Q346 183 347 189 M335 217Q338 223 340 229 M351 291Q351 296 354 299 M345 235Q344 239 345 243 M350 283Q351 289 352 295 M363 210Q366 214 367 218 M355 225Q357 228 355 231 M350 203Q351 208 352 214 M366 231Q365 235 366 240 M350 300Q349 305 348 310" stroke-width="0.8" opacity="0.35"/>
<path d="M422 341Q420 344 419 347 M384 353Q384 359 382 363 M371 335Q369 338 369 343 M418 368Q417 370 417 373 M413 336Q410 338 411 342 M414 331Q413 336 410 340 M415 332Q411 336 407 341 M391 325Q393 329 393 334 M395 449Q398 453 397 457 M392 350Q390 353 388 356 M376 378Q372 382 370 387 M393 449Q394 454 395 458 M399 329Q401 333 403 338 M407 368Q406 371 408 373 M397 316Q396 319 394 321 M377 413Q375 415 375 417 M396 384Q397 388 399 390 M376 381Q375 384 372 387 M406 330Q408 335 408 340 M396 311Q397 315 395 318 M386 339Q384 345 381 350 M408 333Q409 337 408 342 M396 315Q395 320 394 324 M406 383Q406 388 409 391 M397 409Q397 412 394 414 M418 326Q417 330 413 333 M405 364Q403 368 405 371 M387 445Q384 448 385 451 M384 352Q385 357 388 361 M392 308Q391 311 391 315 M382 381Q379 383 378 387 M432 364Q429 369 424 372 M381 373Q378 377 377 381 M397 387Q397 390 400 393 M398 368Q394 372 391 376 M379 343Q381 347 382 351 M392 409Q394 415 393 420 M382 387Q382 394 380 400 M403 423Q401 426 400 429 M407 361Q404 365 404 371 M415 372Q414 375 412 378 M378 347Q379 351 380 355 M406 375Q405 381 404 386 M403 364Q406 366 405 369 M396 416Q398 421 401 426 M411 382Q410 388 406 391 M406 343Q405 347 402 350 M375 340Q373 342 371 344 M397 442Q395 448 391 453 M372 331Q374 334 376 337 M408 375Q410 377 411 379 M410 294Q412 300 409 305 M387 378Q385 383 384 389 M397 360Q395 364 395 368 M404 419Q403 423 401 427 M388 323Q388 326 388 330 M384 394Q383 397 383 400 M417 326Q418 329 418 331 M415 378Q415 383 413 387 M398 342Q399 347 402 351 M394 300Q394 306 397 310 M395 491Q396 493 395 496 M372 348Q374 352 373 357 M370 354Q370 358 369 362 M414 351Q415 357 414 363 M411 335Q407 339 405 344 M394 401Q392 405 395 408 M397 499Q396 502 394 505 M416 319Q418 322 417 325 M398 404Q400 407 400 410" stroke-width="0.7" opacity="0.1"/>
<path d="M147 307Q146 310 148 312 M161 325Q159 328 158 330 M163 317Q163 321 164 324 M159 307Q159 311 159 315 M159 315Q158 319 159 324 M158 317Q155 317 155 320 M150 315Q148 317 148 319 M138 312Q139 315 138 318 M162 306Q163 310 163 315 M161 303Q158 306 157 310 M158 294Q158 298 156 301 M145 316Q141 320 139 325 M152 289Q148 292 148 297 M160 288Q159 290 160 292 M149 289Q149 293 152 296 M144 313Q142 316 140 320 M143 308Q142 313 140 318 M147 324Q145 326 144 330 M151 278Q149 282 146 285 M148 276Q149 281 150 285 M148 289Q144 293 141 296 M148 277Q149 281 150 284 M138 294Q140 298 141 302 M157 315Q159 319 157 322 M142 304Q139 305 139 308 M153 308Q152 311 153 314 M151 292Q150 294 150 296 M145 273Q144 278 143 282 M151 308Q152 313 151 319 M158 288Q159 291 158 294 M161 321Q162 325 162 329 M139 312Q137 317 137 323 M139 317Q141 321 142 325 M158 266Q160 270 162 275 M150 328Q148 330 147 333 M148 294Q149 296 148 299 M144 275Q142 277 140 280 M162 308Q162 314 165 318 M162 306Q163 309 166 312 M153 326Q149 330 147 335" stroke-width="0.7" opacity="0.18"/>
</g>
<g fill="none" stroke-linecap="round" stroke-linejoin="round" filter="url(#sf)">
<path d="M28.0 188.0 C33.3 185.7 49.2 178.5 60.0 174.0 C70.8 169.5 83.0 165.2 93.0 161.0 C103.0 156.8 112.5 152.3 120.0 149.0 C127.5 145.7 130.0 145.0 138.0 141.0 C146.0 137.0 163.0 127.7 168.0 125.0" stroke="#6e6e6e" stroke-width="1.1"/>
<path d="M116.0 198.0 C111.7 201.3 99.0 211.0 90.0 218.0 C81.0 225.0 68.7 234.8 62.0 240.0 C55.3 245.2 54.3 247.7 50.0 249.0 C45.7 250.3 38.3 248.2 36.0 248.0" stroke="#6e6e6e" stroke-width="1.0"/>
<path d="M50.0 249.0 C53.3 251.0 63.3 257.0 70.0 261.0 C76.7 265.0 83.0 268.2 90.0 273.0 C97.0 277.8 104.5 283.8 112.0 290.0 C119.5 296.2 131.2 306.7 135.0 310.0" stroke="#a0a0a0" stroke-width="0.9"/>
<path d="M28.0 303.0 C31.7 305.5 43.7 313.3 50.0 318.0 C56.3 322.7 58.3 323.8 66.0 331.0 C73.7 338.2 87.3 352.7 96.0 361.0 C104.7 369.3 111.5 374.8 118.0 381.0 C124.5 387.2 130.5 395.7 135.0 398.0 C139.5 400.3 143.3 395.5 145.0 395.0" stroke="#404040" stroke-width="1.3"/>
<path d="M135.0 311.0 C135.8 315.5 138.7 329.0 140.0 338.0 C141.3 347.0 142.2 358.0 143.0 365.0 C143.8 372.0 144.7 375.0 145.0 380.0 C145.3 385.0 145.0 392.5 145.0 395.0" stroke="#6e6e6e" stroke-width="1.1"/>
<path d="M118.0 381.0 C118.3 385.0 117.2 400.7 120.0 405.0 C122.8 409.3 128.7 404.5 135.0 407.0 C141.3 409.5 154.2 417.8 158.0 420.0" stroke="#a0a0a0" stroke-width="1.0"/>
<path d="M175.2 119.6 C175.3 117.0 175.0 109.7 176.1 104.3 C177.2 98.9 179.3 92.0 182.0 87.3 C184.7 82.6 188.5 79.0 192.2 76.3 C195.9 73.6 200.1 72.2 204.1 71.2 C208.1 70.2 214.0 70.5 216.0 70.3" stroke="#2e2e2e" stroke-width="1.5"/>
<path d="M178.6 112.8 C179.4 109.7 181.4 99.2 183.7 94.1 C186.0 89.0 189.1 85.0 192.2 82.2 C195.3 79.4 198.7 78.4 202.4 77.1 C206.1 75.8 212.3 75.0 214.3 74.6" stroke="#555" stroke-width="1.1"/>
<path d="M175.2 119.6 C177.2 118.5 183.4 116.5 187.1 112.8 C190.8 109.1 194.5 102.0 197.3 97.5 C200.1 93.0 201.8 88.4 204.1 85.6 C206.4 82.8 208.3 81.3 210.9 80.5 C213.5 79.7 217.1 79.7 219.4 80.5 C221.7 81.3 223.4 83.9 224.5 85.6 C225.6 87.3 225.9 89.8 226.2 90.7" stroke="#2e2e2e" stroke-width="1.5"/>
<path d="M222.8 87.3 C222.5 90.4 222.5 100.6 221.1 106.0 C219.7 111.4 216.9 115.1 214.3 119.6 C211.8 124.1 209.9 128.1 205.8 133.2 C201.8 138.3 195.0 144.7 190.0 150.0 C185.0 155.3 178.3 162.5 176.0 165.0" stroke="#6e6e6e" stroke-width="1.1"/>
<path d="M216.0 70.3 C216.8 69.7 218.8 68.0 221.1 66.9 C223.4 65.8 226.8 64.3 229.6 63.5 C232.4 62.6 235.5 62.4 238.1 61.8 C240.7 61.2 242.3 60.7 244.9 60.1 C247.5 59.5 250.9 59.2 253.4 58.4 C255.9 57.5 257.6 56.4 260.2 55.0 C262.8 53.6 266.1 50.9 268.7 49.9 C271.2 48.9 273.9 48.2 275.5 49.1 C277.1 50.0 277.8 52.3 278.1 55.0 C278.4 57.7 277.6 62.1 277.2 65.2 C276.8 68.3 275.9 70.0 275.5 73.7 C275.1 77.4 274.8 85.0 274.7 87.3" stroke="#404040" stroke-width="1.4"/>
<path d="M260.2 55.0 C261.3 54.7 264.7 53.3 267.0 53.3 C269.3 53.3 272.7 53.3 273.8 55.0 C274.9 56.7 273.8 62.1 273.8 63.5" stroke="#6e6e6e" stroke-width="1.0"/>
<circle cx="223.7" cy="72.9" r="1.9" stroke="#333" stroke-width="1.1"/>
<path d="M280.6 66.9 C282.0 65.8 285.7 61.2 289.1 60.1 C292.5 59.0 297.0 59.2 301.0 60.1 C305.0 61.0 309.2 62.9 312.9 65.2 C316.6 67.5 321.0 70.6 323.1 73.7 C325.2 76.8 326.0 80.5 325.7 83.9 C325.4 87.3 323.2 91.5 321.4 94.1 C319.5 96.6 315.7 98.3 314.6 99.2" stroke="#404040" stroke-width="1.3"/>
<path d="M294.2 68.6 C295.9 68.0 301.0 65.2 304.4 65.2 C307.8 65.2 311.8 66.6 314.6 68.6 C317.4 70.6 320.0 73.7 321.4 77.1 C322.8 80.5 323.7 85.6 323.1 89.0 C322.5 92.4 318.9 96.1 318.0 97.5" stroke="#555" stroke-width="1.1"/>
<path d="M267.0 95.8 C268.4 94.7 272.1 90.4 275.5 89.0 C278.9 87.6 283.1 86.7 287.4 87.3 C291.6 87.9 297.3 89.9 301.0 92.4 C304.7 95.0 306.9 98.9 309.5 102.6 C312.1 106.3 314.3 110.0 316.3 114.5 C318.3 119.0 320.5 127.3 321.4 129.8" stroke="#6e6e6e" stroke-width="1.2"/>
<path d="M268.7 99.2 C271.2 98.6 279.2 95.5 284.0 95.8 C288.8 96.1 293.6 98.4 297.6 100.9 C301.6 103.5 305.0 106.8 307.8 111.1 C310.6 115.3 313.5 123.9 314.6 126.4" stroke="#a0a0a0" stroke-width="1.0"/>
<path d="M270.0 103.0 C272.7 102.7 281.0 100.3 286.0 101.0 C291.0 101.7 296.0 103.8 300.0 107.0 C304.0 110.2 308.3 117.8 310.0 120.0" stroke="#a0a0a0" stroke-width="0.9"/>
<path d="M280.6 66.9 C280.2 68.2 278.8 72.0 278.0 75.0 C277.2 78.0 276.3 83.3 276.0 85.0" stroke="#6e6e6e" stroke-width="1.0"/>
<circle cx="236" cy="62" r="1.4" stroke="#6e6e6e" stroke-width="0.9"/>
<circle cx="246" cy="60" r="1.4" stroke="#6e6e6e" stroke-width="0.9"/>
<circle cx="92.0" cy="152.0" r="2.7" fill="#fafafa" stroke="#8a8a8a" stroke-width="0.9"/>
<circle cx="95.0" cy="155.2" r="2.7" fill="#fafafa" stroke="#8a8a8a" stroke-width="0.9"/>
<circle cx="98.0" cy="158.3" r="2.7" fill="#fafafa" stroke="#8a8a8a" stroke-width="0.9"/>
<circle cx="101.0" cy="161.5" r="2.7" fill="#fafafa" stroke="#8a8a8a" stroke-width="0.9"/>
<circle cx="104.0" cy="164.7" r="2.7" fill="#fafafa" stroke="#8a8a8a" stroke-width="0.9"/>
<circle cx="107.0" cy="167.8" r="2.7" fill="#fafafa" stroke="#8a8a8a" stroke-width="0.9"/>
<circle cx="110.0" cy="171.0" r="2.7" fill="#fafafa" stroke="#8a8a8a" stroke-width="0.9"/>
<circle cx="113.5" cy="173.5" r="2.7" fill="#fafafa" stroke="#8a8a8a" stroke-width="0.9"/>
<circle cx="117.0" cy="176.0" r="2.7" fill="#fafafa" stroke="#8a8a8a" stroke-width="0.9"/>
<circle cx="120.5" cy="178.5" r="2.7" fill="#fafafa" stroke="#8a8a8a" stroke-width="0.9"/>
<circle cx="124.0" cy="181.0" r="2.7" fill="#fafafa" stroke="#8a8a8a" stroke-width="0.9"/>
<circle cx="128.5" cy="183.5" r="2.7" fill="#fafafa" stroke="#8a8a8a" stroke-width="0.9"/>
<circle cx="133.0" cy="186.0" r="2.7" fill="#fafafa" stroke="#8a8a8a" stroke-width="0.9"/>
<circle cx="137.0" cy="188.5" r="2.7" fill="#fafafa" stroke="#8a8a8a" stroke-width="0.9"/>
<circle cx="141.0" cy="191.0" r="2.7" fill="#fafafa" stroke="#8a8a8a" stroke-width="0.9"/>
<circle cx="149.0" cy="128.0" r="2.7" fill="#fafafa" stroke="#8a8a8a" stroke-width="0.9"/>
<circle cx="146.3" cy="131.3" r="2.7" fill="#fafafa" stroke="#8a8a8a" stroke-width="0.9"/>
<circle cx="143.7" cy="134.7" r="2.7" fill="#fafafa" stroke="#8a8a8a" stroke-width="0.9"/>
<circle cx="141.0" cy="138.0" r="2.7" fill="#fafafa" stroke="#8a8a8a" stroke-width="0.9"/>
<circle cx="140.2" cy="142.6" r="2.7" fill="#fafafa" stroke="#8a8a8a" stroke-width="0.9"/>
<circle cx="139.4" cy="147.2" r="2.7" fill="#fafafa" stroke="#8a8a8a" stroke-width="0.9"/>
<circle cx="138.6" cy="151.8" r="2.7" fill="#fafafa" stroke="#8a8a8a" stroke-width="0.9"/>
<circle cx="137.8" cy="156.4" r="2.7" fill="#fafafa" stroke="#8a8a8a" stroke-width="0.9"/>
<circle cx="137.0" cy="161.0" r="2.7" fill="#fafafa" stroke="#8a8a8a" stroke-width="0.9"/>
<circle cx="137.1" cy="165.3" r="2.7" fill="#fafafa" stroke="#8a8a8a" stroke-width="0.9"/>
<circle cx="137.3" cy="169.6" r="2.7" fill="#fafafa" stroke="#8a8a8a" stroke-width="0.9"/>
<circle cx="137.4" cy="173.9" r="2.7" fill="#fafafa" stroke="#8a8a8a" stroke-width="0.9"/>
<circle cx="137.6" cy="178.1" r="2.7" fill="#fafafa" stroke="#8a8a8a" stroke-width="0.9"/>
<circle cx="137.7" cy="182.4" r="2.7" fill="#fafafa" stroke="#8a8a8a" stroke-width="0.9"/>
<circle cx="137.9" cy="186.7" r="2.7" fill="#fafafa" stroke="#8a8a8a" stroke-width="0.9"/>
<circle cx="138.0" cy="191.0" r="2.7" fill="#fafafa" stroke="#8a8a8a" stroke-width="0.9"/>
<circle cx="141.0" cy="191.0" r="2.7" fill="#fafafa" stroke="#8a8a8a" stroke-width="0.9"/>
<circle cx="146.0" cy="187.5" r="2.7" fill="#fafafa" stroke="#8a8a8a" stroke-width="0.9"/>
<circle cx="151.0" cy="184.0" r="2.7" fill="#fafafa" stroke="#8a8a8a" stroke-width="0.9"/>
<circle cx="154.3" cy="181.3" r="2.7" fill="#fafafa" stroke="#8a8a8a" stroke-width="0.9"/>
<circle cx="157.7" cy="178.7" r="2.7" fill="#fafafa" stroke="#8a8a8a" stroke-width="0.9"/>
<circle cx="161.0" cy="176.0" r="2.7" fill="#fafafa" stroke="#8a8a8a" stroke-width="0.9"/>
<path d="M178.0 190.0 C175.6 194.1 167.4 206.8 163.6 214.7 C159.8 222.6 156.0 230.5 155.3 237.4 C154.6 244.3 157.0 248.4 159.4 256.0 C161.8 263.6 167.6 274.6 169.7 282.8 C171.8 291.1 171.8 298.6 171.8 305.5 C171.8 312.4 170.0 320.9 169.7 324.0" stroke="#3a3a3a" stroke-width="1.3"/>
<path d="M182.1 196.2 C180.7 199.6 177.3 208.2 173.9 216.8 C170.5 225.4 163.2 239.1 161.5 247.7 C159.8 256.3 161.2 261.5 163.6 268.4 C166.0 275.3 173.2 282.8 175.9 289.0 C178.6 295.2 179.0 300.0 180.0 305.5 C181.0 311.0 181.8 319.2 182.1 322.0" stroke="#444" stroke-width="1.2"/>
<path d="M169.7 202.4 C168.0 207.2 160.8 222.9 159.4 231.2 C158.0 239.4 159.1 244.3 161.5 251.9 C163.9 259.5 173.2 269.7 173.9 276.6 C174.6 283.5 167.7 286.2 165.6 293.1 C163.5 300.0 162.2 313.7 161.5 317.8" stroke="#555" stroke-width="1.1"/>
<path d="M175.9 231.0 C175.2 235.5 171.8 250.3 171.8 258.0 C171.8 265.7 173.9 270.0 175.9 277.0 C177.9 284.0 182.3 293.2 184.0 300.0 C185.7 306.8 185.7 315.0 186.0 318.0" stroke="#666" stroke-width="1.0"/>
<path d="M184.0 190.0 C182.7 196.8 177.0 215.5 176.0 231.0 C175.0 246.5 176.3 269.2 178.0 283.0 C179.7 296.8 184.2 307.5 186.0 314.0 C187.8 320.5 188.5 320.7 189.0 322.0" stroke="#888" stroke-width="0.9"/>
<path d="M176.0 168.0 C177.2 170.5 182.2 178.7 183.0 183.0 C183.8 187.3 181.3 192.2 181.0 194.0" stroke="#404040" stroke-width="1.2"/>
<path d="M180.0 192.0 C178.0 197.0 171.0 212.3 168.0 222.0 C165.0 231.7 161.7 241.2 162.0 250.0 C162.3 258.8 167.3 266.7 170.0 275.0 C172.7 283.3 177.0 292.5 178.0 300.0 C179.0 307.5 176.3 316.7 176.0 320.0" stroke="#555" stroke-width="1.0"/>
<path d="M172.0 200.0 C170.7 204.7 164.7 217.7 164.0 228.0 C163.3 238.3 167.7 251.7 168.0 262.0 C168.3 272.3 165.7 280.7 166.0 290.0 C166.3 299.3 169.3 313.3 170.0 318.0" stroke="#666" stroke-width="0.9"/>
<path d="M160.0 236.0 C160.5 240.3 163.0 253.0 163.0 262.0 C163.0 271.0 159.5 280.3 160.0 290.0 C160.5 299.7 165.0 315.0 166.0 320.0" stroke="#777" stroke-width="0.9"/>
<path d="M325.0 111.0 C333.8 112.7 356.7 116.8 378.0 121.0 C399.3 125.2 428.8 131.0 453.0 136.0 C477.2 141.0 511.3 148.5 523.0 151.0" stroke="#a0a0a0" stroke-width="1.0"/>
<path d="M331.0 146.2 C335.8 146.8 348.0 146.8 359.5 149.9 C371.0 153.0 388.6 160.0 400.0 164.7 C411.4 169.4 416.7 172.4 428.0 178.0 C439.3 183.6 459.3 193.8 468.0 198.0 C476.7 202.2 478.0 202.2 480.0 203.0" stroke="#404040" stroke-width="1.3"/>
<path d="M480.0 203.0 C477.2 207.2 469.7 219.2 463.0 228.0 C456.3 236.8 447.5 247.7 440.0 256.0 C432.5 264.3 421.7 274.3 418.0 278.0" stroke="#404040" stroke-width="1.3"/>
<path d="M523.0 236.0 C520.0 241.3 510.5 258.5 505.0 268.0 C499.5 277.5 495.8 285.3 490.0 293.0 C484.2 300.7 473.3 310.5 470.0 314.0" stroke="#a0a0a0" stroke-width="1.0"/>
<path d="M331.0 146.2 C333.7 150.5 342.0 161.6 347.1 172.1 C352.2 182.6 357.8 198.1 361.9 209.2 C366.0 220.3 369.9 230.7 371.8 238.9 C373.7 247.2 373.4 252.1 373.0 258.7 C372.6 265.3 371.6 272.7 369.3 278.5 C367.1 284.3 364.0 287.9 359.5 293.3 C355.0 298.7 345.0 307.7 342.1 310.6" stroke="#333" stroke-width="1.4"/>
<path d="M334.7 199.3 C335.1 201.8 336.0 206.8 337.2 214.2 C338.4 221.6 341.7 234.0 342.1 243.9 C342.5 253.8 339.7 264.0 339.7 273.5 C339.7 283.0 341.7 296.2 342.1 300.7" stroke="#444" stroke-width="1.2"/>
<path d="M337.2 167.2 C339.3 173.0 346.7 189.9 349.6 201.8 C352.5 213.8 352.9 227.8 354.5 238.9 C356.1 250.0 359.5 258.7 359.5 268.6 C359.5 278.5 355.3 293.4 354.5 298.3" stroke="#4a4a4a" stroke-width="1.2"/>
<path d="M347.0 222.0 C347.8 226.8 351.7 240.8 352.0 251.0 C352.3 261.2 350.3 273.5 349.0 283.0 C347.7 292.5 344.8 303.8 344.0 308.0" stroke="#666" stroke-width="1.0"/>
<path d="M332.0 244.0 C333.3 248.0 338.9 260.7 339.7 268.0 C340.5 275.3 336.9 281.3 337.0 288.0 C337.1 294.7 339.5 304.7 340.0 308.0" stroke="#666" stroke-width="1.0"/>
<path d="M376.8 285.9 C373.9 288.0 365.7 294.2 359.5 298.3 C353.3 302.4 343.0 308.6 339.7 310.6" stroke="#444" stroke-width="1.2"/>
<path d="M334.7 199.3 C334.2 199.8 331.9 202.2 332.0 202.0 C332.1 201.8 334.0 197.7 335.0 198.0 C336.0 198.3 337.5 203.0 338.0 204.0" stroke="#444" stroke-width="1.0"/>
<path d="M345.0 185.0 C347.2 191.7 355.0 212.2 358.0 225.0 C361.0 237.8 361.7 251.2 363.0 262.0 C364.3 272.8 365.5 285.3 366.0 290.0" stroke="#555" stroke-width="1.0"/>
<path d="M339.0 215.0 C340.2 220.8 343.8 238.3 346.0 250.0 C348.2 261.7 351.7 275.8 352.0 285.0 C352.3 294.2 348.7 301.7 348.0 305.0" stroke="#666" stroke-width="1.0"/>
<path d="M328.0 200.0 C328.8 206.7 332.7 228.3 333.0 240.0 C333.3 251.7 330.0 260.0 330.0 270.0 C330.0 280.0 332.5 295.0 333.0 300.0" stroke="#888" stroke-width="0.9"/>
<path d="M355.0 200.0 C357.2 206.7 364.5 227.5 368.0 240.0 C371.5 252.5 374.7 269.2 376.0 275.0" stroke="#777" stroke-width="0.9"/>
<path d="M330.0 170.0 C330.7 173.3 334.0 182.5 334.0 190.0 C334.0 197.5 331.2 206.7 330.0 215.0 C328.8 223.3 327.5 235.8 327.0 240.0" stroke="#a0a0a0" stroke-width="0.9"/>
<path d="M192.0 213.0 C192.8 212.7 194.7 210.2 197.0 211.0 C199.3 211.8 203.7 213.8 206.0 218.0 C208.3 222.2 209.5 229.5 211.0 236.0 C212.5 242.5 212.8 249.3 215.0 257.0 C217.2 264.7 220.8 274.5 224.0 282.0 C227.2 289.5 230.5 296.7 234.0 302.0 C237.5 307.3 243.2 312.0 245.0 314.0" stroke="#404040" stroke-width="1.3"/>
<path d="M192.0 213.0 C192.0 215.3 190.8 221.7 192.0 227.0 C193.2 232.3 195.2 239.8 199.0 245.0 C202.8 250.2 212.3 255.8 215.0 258.0" stroke="#6e6e6e" stroke-width="1.0"/>
<path d="M200.0 222.0 C200.8 224.7 203.3 233.3 205.0 238.0 C206.7 242.7 209.2 248.0 210.0 250.0" stroke="#a0a0a0" stroke-width="0.9"/>
<path d="M328.5 263.6 C327.5 266.9 324.6 277.2 322.4 283.4 C320.1 289.6 315.4 296.2 315.0 300.7 C314.6 305.2 315.0 308.5 319.9 310.6 C324.8 312.7 340.5 312.7 344.6 313.1" stroke="#2a2a2a" stroke-width="1.6"/>
<path d="M224.9 231.1 C227.4 231.7 234.6 233.4 239.8 234.8 C245.0 236.2 251.8 238.6 255.9 239.8 C260.0 241.0 263.1 241.8 264.5 242.2" stroke="#b0b0b0" stroke-width="3.2"/>
<path d="M226.0 231.5 C228.3 232.0 235.0 233.2 240.0 234.5 C245.0 235.8 253.3 238.7 256.0 239.5" stroke="#8a8a8a" stroke-width="1.0"/>
<path d="M294.3 234.8 C296.4 233.6 302.3 229.2 306.6 227.4 C310.9 225.7 318.0 224.8 320.3 224.3" stroke="#a8a8a8" stroke-width="3.2"/>
<path d="M296.0 233.5 C297.8 232.5 303.0 229.0 307.0 227.5 C311.0 226.0 317.8 225.0 320.0 224.5" stroke="#888" stroke-width="1.0"/>
<path d="M238.5 248.4 C239.9 247.9 244.1 245.7 247.2 245.3 C250.3 244.9 254.0 244.4 257.1 246.0 C260.2 247.6 264.4 253.2 265.8 254.6" stroke="#333" stroke-width="1.3"/>
<path d="M242.2 252.2 C243.9 252.6 248.7 254.2 252.2 254.6 C255.7 255.0 261.4 254.6 263.3 254.6" stroke="#888" stroke-width="1.0"/>
<path d="M294.3 247.2 C295.5 246.2 298.8 242.3 301.7 241.0 C304.6 239.7 308.9 239.1 311.6 239.1 C314.3 239.1 316.2 241.2 317.8 241.0 C319.4 240.8 320.5 238.5 321.0 238.0" stroke="#333" stroke-width="1.3"/>
<path d="M295.5 248.5 C296.8 248.6 300.2 249.4 303.0 249.0 C305.8 248.6 310.5 246.5 312.0 246.0" stroke="#888" stroke-width="1.0"/>
<circle cx="252.2" cy="250.3" r="4.3" fill="#aaa" stroke="#3a3a3a" stroke-width="1.2"/>
<circle cx="252.4" cy="250" r="1.7" fill="#333" stroke="none"/>
<circle cx="302.9" cy="244.7" r="4" fill="#aaa" stroke="#3a3a3a" stroke-width="1.2"/>
<circle cx="303" cy="244.5" r="1.6" fill="#333" stroke="none"/>
<path d="M274.0 258.0 C274.2 260.0 275.2 266.0 275.0 270.0 C274.8 274.0 273.3 280.0 273.0 282.0" stroke="#c8c8c8" stroke-width="2.0"/>
<path d="M267.0 284.3 C267.2 285.1 267.0 288.1 268.2 289.3 C269.4 290.6 271.7 291.8 274.4 291.8 C277.1 291.8 281.2 290.6 284.3 289.3 C287.4 288.1 291.6 285.1 293.0 284.3" stroke="#8a8a8a" stroke-width="1.0"/>
<path d="M262.0 304.4 C264.0 304.6 269.8 305.9 274.0 305.6 C278.2 305.3 283.2 303.5 287.2 302.6 C291.2 301.7 296.2 300.6 298.0 300.2" stroke="#555" stroke-width="1.3"/>
<path d="M270.4 309.2 C272.0 309.7 276.4 312.2 280.0 312.2 C283.6 312.2 290.0 309.7 292.0 309.2" stroke="#999" stroke-width="1.0"/>
<path d="M203.0 218.0 C207.5 216.0 218.8 209.0 230.0 206.0 C241.2 203.0 256.7 200.3 270.0 200.0 C283.3 199.7 299.2 201.5 310.0 204.0 C320.8 206.5 330.8 213.2 335.0 215.0" stroke="#c8c8c8" stroke-width="0.9"/>
<path d="M230.5 305.0 C231.2 307.1 232.1 313.8 234.5 317.5 C236.9 321.2 240.9 324.7 245.0 327.5 C249.1 330.3 253.6 332.9 259.0 334.5 C264.4 336.1 271.7 337.4 277.6 337.0 C283.5 336.6 289.4 334.7 294.4 332.0 C299.4 329.3 304.4 324.8 307.6 321.0 C310.8 317.2 312.6 311.0 313.6 309.0" stroke="#8c8c8c" stroke-width="4.2"/>
<path d="M231.0 306.0 C231.7 308.0 232.5 314.3 235.0 318.0 C237.5 321.7 242.0 325.2 246.0 328.0 C250.0 330.8 253.7 333.4 259.0 335.0 C264.3 336.6 274.5 337.1 277.6 337.5" stroke="#555" stroke-width="2.6"/>
<path d="M277.6 336.0 C280.4 335.2 289.4 334.0 294.4 331.5 C299.4 329.0 304.4 324.8 307.6 321.0 C310.8 317.2 312.6 311.0 313.6 309.0" stroke="#666" stroke-width="1.0"/>
<path d="M229.6 304.4 C230.2 306.4 230.8 312.8 233.2 316.4 C235.6 320.0 239.8 323.2 244.0 326.0 C248.2 328.8 252.8 331.6 258.4 333.2 C264.0 334.8 274.4 335.2 277.6 335.6" stroke="#3a3a3a" stroke-width="1.6"/>
<path d="M231.0 306.0 C231.8 308.0 233.2 314.5 236.0 318.0 C238.8 321.5 243.7 324.3 248.0 327.0 C252.3 329.7 257.0 332.3 262.0 334.0 C267.0 335.7 275.3 336.5 278.0 337.0" stroke="#2e2e2e" stroke-width="1.0"/>
<path d="M231.0 305.6 C232.3 307.6 235.6 314.8 239.0 317.6 C242.4 320.4 248.0 321.0 251.2 322.4 C254.4 323.8 257.2 325.4 258.4 326.0" stroke="#666" stroke-width="1.0"/>
<circle cx="260.2" cy="316.4" r="5.2" stroke="#555" stroke-width="1.3"/>
<path d="M256.0 308.0 L270.4 304.4" stroke="#444" stroke-width="1.2"/>
<path d="M173.0 326.0 C175.8 326.3 182.8 327.8 190.0 328.0 C197.2 328.2 209.7 328.2 216.0 327.0 C222.3 325.8 226.0 322.0 228.0 321.0" stroke="#404040" stroke-width="1.2"/>
<path d="M219.3 326.6 C220.4 328.8 222.7 335.1 226.0 340.0 C229.3 344.9 234.3 351.6 239.1 356.3 C243.9 361.0 249.5 365.0 255.0 368.0 C260.5 371.0 264.9 374.2 272.1 374.5 C279.4 374.8 290.2 373.6 298.5 369.5 C306.8 365.4 315.6 357.9 321.6 349.7 C327.7 341.4 332.6 324.9 334.8 320.0" stroke="#484848" stroke-width="1.4"/>
<path d="M222.0 324.0 C223.7 327.5 227.3 339.0 232.0 345.0 C236.7 351.0 243.3 356.2 250.0 360.0 C256.7 363.8 264.0 367.5 272.0 368.0 C280.0 368.5 290.3 366.8 298.0 363.0 C305.7 359.2 312.7 352.5 318.0 345.0 C323.3 337.5 328.0 322.5 330.0 318.0" stroke="#999" stroke-width="0.9"/>
<path d="M338.0 318.0 C341.7 321.3 355.0 332.3 360.0 338.0 C365.0 343.7 365.0 347.0 368.0 352.0 C371.0 357.0 376.3 365.3 378.0 368.0" stroke="#a0a0a0" stroke-width="1.0"/>
<path d="M183.0 399.3 C183.0 404.4 183.0 418.4 183.0 430.0 C183.0 441.6 183.0 462.2 183.0 468.6" stroke="#8a8a8a" stroke-width="1.0"/>
<path d="M158.0 420.0 C160.5 424.6 168.8 438.8 173.0 447.5 C177.2 456.2 180.5 464.2 183.0 472.5 C185.5 480.8 185.3 489.9 188.0 497.5 C190.7 505.1 196.2 510.4 199.4 518.1 C202.6 525.9 205.4 534.4 207.2 544.0 C209.0 553.6 211.5 563.7 210.4 576.0 C209.3 588.3 206.1 603.7 200.8 617.6 C195.5 631.5 185.9 645.5 178.4 659.2 C170.9 672.9 159.7 693.2 156.0 700.0" stroke="#4a4a4a" stroke-width="1.2"/>
<path d="M153.0 365.0 C155.5 370.0 162.6 389.2 168.0 395.0 C173.4 400.8 182.6 399.2 185.5 400.0" stroke="#999" stroke-width="1.0"/>
<path d="M200.5 365.0 L208.0 380.0" stroke="#999" stroke-width="1.0"/>
<path d="M185.0 470.0 C186.0 475.9 187.5 493.3 191.2 505.6 C194.9 517.9 204.5 537.6 207.2 544.0" stroke="#a0a0a0" stroke-width="0.9"/>
<circle cx="207.7" cy="389.4" r="4.8" stroke="#404040" stroke-width="1.6"/>
<circle cx="377.8" cy="371.2" r="4.2" stroke="#555" stroke-width="1.4"/>
<path d="M212.0 392.7 C218.2 399.9 237.3 421.3 249.0 435.6 C260.7 449.9 271.6 465.9 282.0 478.5 C292.4 491.1 303.7 502.9 311.7 511.5 C319.7 520.1 326.9 526.9 330.0 530.0" stroke="#8a8a8a" stroke-width="1.0"/>
<path d="M373.0 375.0 C372.1 376.8 369.2 381.0 367.9 386.0 C366.6 391.0 366.1 397.8 365.0 405.0 C363.9 412.2 363.8 421.5 361.3 429.0 C358.8 436.5 353.9 443.4 350.0 450.0 C346.1 456.6 344.5 458.4 338.1 468.6 C331.7 478.9 317.6 500.9 311.7 511.5 C305.8 522.1 304.4 528.6 303.0 532.0" stroke="#505050" stroke-width="1.2"/>
<path d="M303.0 532.0 C301.8 534.7 298.5 543.0 296.0 548.0 C293.5 553.0 289.3 559.7 288.0 562.0" stroke="#b0b0b0" stroke-width="1.0"/>
<path d="M200.8 617.6 C206.0 617.7 220.8 617.5 232.0 618.0 C243.2 618.5 253.5 618.7 268.0 620.8 C282.5 622.9 303.2 626.7 319.2 630.4 C335.2 634.1 348.5 636.3 364.0 643.2 C379.5 650.1 404.0 667.2 412.0 672.0" stroke="#a8a8a8" stroke-width="1.0"/>
<path d="M232.8 617.6 C232.2 622.2 230.1 635.9 229.0 645.0 C227.9 654.1 226.8 667.5 226.4 672.0" stroke="#b0b0b0" stroke-width="1.0"/>
<path d="M420.7 330.0 C422.4 333.8 431.7 343.7 430.6 353.0 C429.5 362.3 418.5 369.5 414.1 386.0 C409.7 402.5 406.4 436.4 404.2 452.1 C402.0 467.8 402.8 470.0 400.9 480.0 C399.0 490.0 393.6 496.0 392.8 512.0 C392.0 528.0 393.9 557.3 396.0 576.0 C398.1 594.7 401.3 603.3 405.6 624.0 C409.9 644.7 418.9 687.3 421.6 700.0" stroke="#a8a8a8" stroke-width="1.0"/>
<path d="M118.0 381.0 C118.3 385.0 117.2 400.7 120.0 405.0 C122.8 409.3 128.7 404.5 135.0 407.0 C141.3 409.5 154.2 417.8 158.0 420.0" stroke="#a0a0a0" stroke-width="1.0"/>
<path d="M160.0 330.0 C163.3 333.3 174.2 342.5 180.0 350.0 C185.8 357.5 192.5 370.8 195.0 375.0" stroke="#a0a0a0" stroke-width="0.9"/>
<path d="M416.7 279.3 C413.5 281.2 402.8 287.3 397.4 290.8 C391.9 294.3 387.2 298.1 384.0 300.5 C380.8 302.9 379.0 304.2 378.0 305.0" stroke="#999" stroke-width="1.0"/>
<path d="M399.4 290.8 C400.0 294.0 401.3 303.0 403.2 310.1 C405.1 317.2 408.0 326.4 410.9 333.2 C413.8 339.9 417.4 346.8 420.6 350.6 C423.8 354.5 428.6 355.4 430.2 356.3" stroke="#999" stroke-width="1.0"/>
<path d="M416.7 279.3 C416.4 282.5 414.1 290.5 414.8 298.5 C415.5 306.5 418.0 318.4 420.6 327.4 C423.2 336.4 428.6 348.3 430.2 352.5" stroke="#aaa" stroke-width="1.0"/>
<path d="M470.0 314.0 C465.9 318.8 451.9 335.8 445.6 342.8 C439.3 349.9 433.1 352.1 432.1 356.3 C431.1 360.5 441.4 364.7 439.8 367.9 C438.2 371.1 427.9 371.8 422.5 375.6 C417.1 379.5 409.7 388.4 407.1 391.0" stroke="#aaa" stroke-width="1.0"/>
<path d="M357.0 321.7 C357.8 324.8 360.1 333.9 362.0 340.0 C363.9 346.1 367.4 355.2 368.5 358.3" stroke="#999" stroke-width="1.0"/>
<path d="M313.0 515.0 C309.2 522.5 297.5 544.2 290.0 560.0 C282.5 575.8 274.7 593.3 268.0 610.0 C261.3 626.7 254.7 645.2 250.0 660.0 C245.3 674.8 241.7 692.5 240.0 699.0" stroke="#d6d6d6" stroke-width="0.9"/>
<path d="M313.0 515.0 C314.2 524.2 317.2 552.5 320.0 570.0 C322.8 587.5 325.8 598.5 330.0 620.0 C334.2 641.5 342.5 685.8 345.0 699.0" stroke="#d6d6d6" stroke-width="0.9"/>
<path d="M313.0 515.0 C317.5 522.5 330.5 544.2 340.0 560.0 C349.5 575.8 360.8 593.3 370.0 610.0 C379.2 626.7 390.8 651.7 395.0 660.0" stroke="#d6d6d6" stroke-width="0.9"/>
<path d="M313.0 515.0 C305.8 519.2 283.8 529.2 270.0 540.0 C256.2 550.8 239.2 570.0 230.0 580.0 C220.8 590.0 217.5 596.7 215.0 600.0" stroke="#d6d6d6" stroke-width="0.9"/>
<path d="M215.0 560.0 C219.2 557.5 231.7 549.2 240.0 545.0 C248.3 540.8 255.0 538.3 265.0 535.0 C275.0 531.7 294.2 526.7 300.0 525.0" stroke="#d6d6d6" stroke-width="0.9"/>
<path d="M240.0 640.0 C243.3 643.3 253.3 650.2 260.0 660.0 C266.7 669.8 276.7 692.5 280.0 699.0" stroke="#d6d6d6" stroke-width="0.9"/>
<path d="M210.0 640.0 C211.7 645.0 219.2 660.2 220.0 670.0 C220.8 679.8 215.8 694.2 215.0 699.0" stroke="#d6d6d6" stroke-width="0.9"/>
<path d="M360.0 560.0 C363.3 566.7 375.0 586.7 380.0 600.0 C385.0 613.3 388.3 633.3 390.0 640.0" stroke="#d8d8d8" stroke-width="0.9"/>
<path d="M200.0 400.0 C202.5 408.3 210.0 433.3 215.0 450.0 C220.0 466.7 224.2 488.3 230.0 500.0 C235.8 511.7 246.7 516.7 250.0 520.0" stroke="#d6d6d6" stroke-width="0.9"/>
<path d="M240.0 400.0 C245.0 406.7 260.0 428.3 270.0 440.0 C280.0 451.7 295.0 465.0 300.0 470.0" stroke="#d8d8d8" stroke-width="0.9"/>
</g>
</g>
</svg>


<!--wm--><svg class="a" style="left:0;top:0" width="1000" height="727"><g fill="#3a3a3a" opacity="0.6"><circle cx="914.5" cy="676.1" r="0.9"/><circle cx="901.7" cy="670.9" r="1.1"/><circle cx="927.6" cy="680.1" r="0.9"/><circle cx="924.1" cy="684.5" r="0.7"/><circle cx="928.9" cy="680.0" r="0.9"/><circle cx="926.0" cy="678.9" r="1.1"/><circle cx="903.5" cy="681.3" r="0.7"/><circle cx="916.3" cy="684.2" r="1.0"/><circle cx="920.2" cy="668.2" r="1.0"/><circle cx="899.5" cy="693.6" r="0.8"/><circle cx="894.0" cy="692.4" r="0.7"/><circle cx="903.2" cy="691.2" r="1.0"/><circle cx="917.7" cy="663.7" r="0.9"/><circle cx="934.9" cy="673.8" r="0.5"/><circle cx="917.5" cy="667.9" r="0.5"/><circle cx="904.1" cy="698.4" r="1.0"/><circle cx="910.7" cy="681.8" r="0.9"/><circle cx="915.2" cy="685.6" r="1.1"/><circle cx="909.4" cy="689.4" r="0.6"/><circle cx="890.9" cy="685.4" r="0.9"/><circle cx="918.2" cy="679.7" r="0.9"/><circle cx="892.7" cy="687.7" r="1.1"/><circle cx="910.5" cy="684.5" r="0.7"/><circle cx="904.1" cy="676.0" r="0.9"/><circle cx="907.0" cy="691.3" r="0.5"/><circle cx="923.1" cy="673.8" r="0.6"/><circle cx="921.4" cy="665.9" r="0.7"/><circle cx="927.5" cy="678.7" r="1.0"/><circle cx="905.2" cy="686.7" r="1.0"/></g><path d="M768 646 L800 678" stroke="#1f1f1f" stroke-width="1" opacity="0.35"/></svg>
<div id="panel" class="a">
  <div class="a tabbar"></div>
  <div class="a tab act" style="left:0;width:37px">图层</div>
  <div class="a tab" style="left:37px;width:32px">路径</div>
  <div class="a tab" style="left:69px;width:34px">字符</div>
  <div class="a tab" style="left:103px;width:33px">段落</div>
  <div class="a tab" style="left:136px;width:35px">通道</div>

  <div class="a ring" style="left:3px;top:28.5px;width:73px;height:17px"><div class="a inb" style="left:1px;top:1px;width:71px;height:15px"></div></div>
  <div class="a txt" style="left:21px;top:31px;font-size:12px">类型</div>
  <div class="a sep" style="top:47.5px;height:1.5px"></div>

  <div class="a ring" style="left:2.5px;top:51px;width:99px;height:18px"><div class="a inb" style="left:1px;top:1px;width:97px;height:16px"></div></div>
  <div class="a txt" style="left:10.5px;top:54px;font-size:11.5px">正常</div>
  <div class="a txt" style="left:108px;top:54.5px;color:#d8d8d8;font-size:10.6px">不透明度:</div>
  <div class="a ring" style="left:154.5px;top:51px;width:47px;height:18px"><div class="a inb" style="left:1.5px;top:1px;width:30.5px;height:16px"></div><div class="a inb" style="left:33.5px;top:1px;width:12px;height:16px"></div></div>
  <div class="a txt" style="left:158px;top:55px;font-size:10.5px;letter-spacing:-0.5px">100%</div>
  <div class="a sep" style="top:70.5px;height:1.2px"></div>

  <div class="a txt" style="left:6px;top:77px;color:#d8d8d8;font-size:11.5px">锁定:</div>
  <div class="a txt" style="left:128.5px;top:77px;color:#d8d8d8;font-size:11px">填充:</div>
  <div class="a ring" style="left:154.5px;top:73px;width:47px;height:18px"><div class="a inb" style="left:1.5px;top:1.5px;width:30.5px;height:15px"></div><div class="a inb" style="left:33.5px;top:1.5px;width:12px;height:15px"></div></div>
  <div class="a txt" style="left:158px;top:77px;font-size:10.5px;letter-spacing:-0.5px">100%</div>
  <div class="a sep" style="top:93px;height:2px"></div>

  <div class="a" style="left:0;top:95px;width:191px;height:432px;background:#4b4b4b"></div>
  <div class="a" style="left:191px;top:95px;width:13px;height:432px;background:#4a4a4a"></div>

  <div class="a row" style="top:95px;height:32px"><div class="a" style="left:26px;top:0;width:165px;height:31px;background:#696969"></div><div class="a eyecol"></div>
    <div class="a thumb" style="top:3px"></div>
    <div class="a lname" style="left:91px;top:12px">图层 1</div>
  </div>
  <div class="a row" style="top:127px"><div class="a eyecol"></div>
    <div class="a thumb" style="background:#1e1e1e"></div>
    <div class="a lname">背景 拷贝 2</div>
  </div>
  <div class="a row" style="top:160px"><div class="a eyecol"></div>
    <div class="a thumb" style="background:#e6e6e6"></div>
    <div class="a lname">背景 拷贝</div>
  </div>
  <div class="a row" style="top:193px"><div class="a eyecol"></div>
    <div class="a thumb" style="background:#c9d3ec"></div>
    <div class="a lname">背景</div>
  </div>

  <div class="a" style="left:0;top:526px;width:204px;height:1px;background:#474747"></div>
  <div class="a" style="left:0;top:527px;width:204px;height:20px;background:#535353"></div>
  <div class="a" style="left:0;top:547px;width:204px;height:2px;background:#3d3d3d"></div>
  <div class="a" style="left:0;top:549px;width:204px;height:5.4px;background:#525252"></div>
</div>
<svg class="a" style="left:0;top:0" width="1000" height="727" viewBox="0 0 1000 727" fill="none" stroke-linecap="round" stroke-linejoin="round">
 <!-- hamburger -->
 <g fill="#9a9a9a"><rect x="971.5" y="7" width="8.5" height="1.3"/><rect x="971.5" y="9.3" width="8.5" height="1.3"/><rect x="971.5" y="11.6" width="8.5" height="2"/></g>
 <!-- magnifier -->
 <circle cx="796" cy="35.8" r="3.2" stroke="#d8d8d8" stroke-width="1.4"/>
 <path d="M793.7 38.2 L791 41" stroke="#d8d8d8" stroke-width="1.8"/>
 <path d="M848.5 36 L851 38.6 L853.5 36" stroke="#c8c8c8" stroke-width="1"/>
 <!-- filter icons -->
 <rect x="869.5" y="32.5" width="10" height="8" stroke="#d4d4d4" stroke-width="1.2"/>
 <path d="M871.5 39 L872.8 36.3 L873.8 37.5 L875 35.8 L876.3 37.8 L877.5 39 Z" fill="#d4d4d4" stroke="none"/>
 <circle cx="895" cy="37" r="4.3" stroke="#c8c8c8" stroke-width="1.1"/>
 <path d="M898.1 33.9 A4.3 4.3 0 0 1 891.9 40.1 Z" fill="#d4d4d4" stroke="none"/>
 <path d="M911 33.4 H920 V35.2 M911 33.4 V35.2 M915.5 33.4 V41 M913.6 41 H917.4" stroke="#dcdcdc" stroke-width="1.6" stroke-linecap="butt"/>
 <rect x="931.5" y="33.5" width="7" height="7" stroke="#d4d4d4" stroke-width="1"/>
 <g fill="#d4d4d4"><circle cx="931.5" cy="33.5" r="1.3"/><circle cx="938.5" cy="33.5" r="1.3"/><circle cx="931.5" cy="40.5" r="1.3"/><circle cx="938.5" cy="40.5" r="1.3"/></g>
 <path d="M953.5 37 V33 H957 L959.5 35.5 V41.5 H956.5" stroke="#d4d4d4" stroke-width="1"/>
 <rect x="951.5" y="38.3" width="4.8" height="4" fill="#d4d4d4" stroke="none"/>
 <rect x="974.5" y="30.8" width="8" height="13.6" rx="4" fill="#474747" stroke="#5c5c5c" stroke-width="0.8"/>
 <circle cx="978.4" cy="33.6" r="3.5" fill="#dadada" stroke="none"/>
 <!-- blend chevrons -->
 <path d="M874.5 58.5 L877 61 L879.5 58.5" stroke="#c8c8c8" stroke-width="1"/>
 <path d="M972 58.4 L975.2 61.8 L978.4 58.4" stroke="#c8c8c8" stroke-width="1"/>
 <path d="M972 80.6 L975.2 84 L978.4 80.6" stroke="#c8c8c8" stroke-width="1"/>
 <!-- lock row -->
 <rect x="818" y="78" width="9" height="8.6" stroke="#d8d8d8" stroke-width="1"/>
 <g fill="#d8d8d8"><rect x="818" y="78" width="2.2" height="2.2"/><rect x="822.4" y="78" width="2.2" height="2.2"/><rect x="820.2" y="80.2" width="2.2" height="2.2"/><rect x="824.6" y="80.2" width="2.2" height="2.2"/><rect x="818" y="82.4" width="2.2" height="2.2"/><rect x="822.4" y="82.4" width="2.2" height="2.2"/><rect x="820.2" y="84.5" width="2.2" height="2.2"/><rect x="824.6" y="84.5" width="2.2" height="2.2"/></g>
 <path d="M846 78.3 L840.5 84.3" stroke="#d8d8d8" stroke-width="1.6"/>
 <path d="M840.2 83.5 C838 84 837 86 836.2 88.6 C839 88 841 87 841.8 85 Z" fill="#d8d8d8" stroke="#d8d8d8" stroke-width="0.6"/>
 <path d="M854 82.3 H864.4 M859.1 77 V87.6" stroke="#d8d8d8" stroke-width="1.2"/>
 <path d="M855.9 80.4 L853.8 82.3 L855.9 84.2 Z M862.3 80.4 L864.4 82.3 L862.3 84.2 Z M857.2 79 L859.1 76.9 L861 79 Z M857.2 85.6 L859.1 87.7 L861 85.6 Z" fill="#d8d8d8" stroke="#d8d8d8" stroke-width="0.6"/>
 <path d="M874.5 77.5 V86 H884 M872 80 H880.5 L882.3 81.8 V88" stroke="#d8d8d8" stroke-width="1"/>
 <path d="M882.5 77.8 L884 79.3" stroke="#d8d8d8" stroke-width="0.8"/>
 <path d="M893.8 81.3 V79.8 A2.7 2.7 0 0 1 899.2 79.8 V81.3" stroke="#dcdcdc" stroke-width="1.3"/>
 <rect x="892" y="81.3" width="9" height="6.4" fill="#dcdcdc" stroke="none"/>
 <circle cx="896.5" cy="84.5" r="0.9" fill="#535353"/>

 <!-- thumb figures -->
 <g stroke="none">
  <g fill="none" stroke="#c0c0c0" stroke-width="0.5">
   <path d="M812 106 L816 101 L819 100 M828 106 L824 101 L821 100"/>
   <circle cx="820" cy="104" r="2.6"/>
   <path d="M817.5 107 L816 112 L814 123 M822.5 107 L824 112 L826 123"/>
   <path d="M812 106 L815 110 M828 106 L825 110"/>
  </g>
  <path d="M817 132 C819 131 822 132 823 135 C823 138 821 141 818 140 C816 139 816 135 817 132 Z" fill="#dcdcdc"/>
  <path d="M813 140 L817 139 L815 152 Z" fill="#444"/>
  <path d="M823 138 L827 141 L824 150 Z" fill="#3a3a3a"/>
  <path d="M815 145 L820 143 L823 156 L813 156 Z" fill="#2c2c2c"/>
  <circle cx="819.5" cy="168" r="2.8" fill="#2a2a2a"/>
  <path d="M816 170 C816 166 823 166 823 170 L823 174 L816 174 Z" fill="#333"/>
  <ellipse cx="819.5" cy="174" rx="2" ry="2.4" fill="#cfcfcf"/>
  <path d="M811 175 L815 169 L817 170 L813 177 Z M828 175 L824 169 L822 170 L826 177 Z" fill="#999"/>
  <path d="M815 178 L824 178 L826 189 L813 189 Z" fill="#f4f4f4"/>
  <circle cx="819.5" cy="200.5" r="2.8" fill="#1e1e1e"/>
  <path d="M816 202 C816 199 823 199 823 202 L823.5 207 L815.5 207 Z" fill="#222"/>
  <ellipse cx="819.5" cy="206.5" rx="2" ry="2.4" fill="#d8c8c0"/>
  <path d="M811 207 L815 201 L817 202 L813 209 Z M828 207 L824 201 L822 202 L826 209 Z" fill="#e8e8e8"/>
  <path d="M815 210 L824 210 L827 222 L812 222 Z" fill="#f2f2f2"/>
 </g>
 <!-- row 1 icons -->
 <path d="M788.5 111.5 C791 107.5 797 107.5 799.5 111.5 C797 115.5 791 115.5 788.5 111.5 Z" fill="#dcdcdc" stroke="none"/>
 <circle cx="794" cy="111.5" r="2.2" fill="#535353"/>
 <circle cx="794" cy="111.2" r="0.8" fill="#aaa"/>
 <rect x="834" y="105.5" width="4.6" height="5.5" rx="2.3" stroke="#d0d0d0" stroke-width="1.2"/>
 <rect x="834" y="111" width="4.6" height="5.5" rx="2.3" stroke="#d0d0d0" stroke-width="1.2"/>
 <path d="M836.3 108.5 V113.5" stroke="#d0d0d0" stroke-width="1.2"/>
 <path d="M841.5 100 V96.5 H845.5 M862 96.5 H866 V100 M841.5 122 V125.6 H845.5 M862 125.6 H866 V122" stroke="#d8d8d8" stroke-width="1.1" stroke-linecap="butt"/>
 <rect x="843" y="98" width="21.5" height="26.5" fill="#fff" stroke="#2e2e2e" stroke-width="1.4"/>
 <!-- checkboxes -->
 <g stroke="#5e5e5e" stroke-width="0.9"><rect x="788.5" y="139" width="10.5" height="10"/><rect x="788.5" y="172" width="10.5" height="10"/><rect x="788.5" y="205" width="10.5" height="10"/></g>
 <!-- lock row4 -->
 <path d="M951.5 207.5 V206.5 A2.5 2.5 0 0 1 956.5 206.5 V207.5" stroke="#d8d8d8" stroke-width="1.1"/>
 <rect x="950.2" y="207.6" width="7.6" height="6" stroke="#d8d8d8" stroke-width="1.1"/>
 <rect x="953.2" y="210" width="1.7" height="1.7" fill="#d8d8d8" stroke="none"/>
 <!-- footer -->
 <g stroke="#8c8c8c" stroke-width="1.1"><rect x="815" y="534" width="5.8" height="6" rx="3"/><rect x="821.2" y="534" width="5.8" height="6" rx="3"/><path d="M817.5 537 H824.5"/></g>
 <text x="838.3" y="541.6" font-family="Liberation Sans" font-style="italic" font-size="12" fill="#dcdcdc">fx</text>
 <path d="M850 544 H853.4 L851.7 546 Z" fill="#e0e0e0" stroke="none"/>
 <rect x="859.6" y="532.2" width="11.7" height="8.8" fill="#dcdcdc" stroke="none"/>
 <circle cx="865.4" cy="536.6" r="2.7" fill="#535353"/>
 <circle cx="889.2" cy="536.5" r="4.6" stroke="#d0d0d0" stroke-width="1.1"/>
 <path d="M892.5 533.2 A4.6 4.6 0 0 1 885.9 539.8 Z" fill="#d8d8d8" stroke="none"/>
 <path d="M895 544 H898.4 L896.7 546 Z" fill="#e0e0e0" stroke="none"/>
 <path d="M906 533.5 H910.5 V534.3 H916.4 V541 H906 Z" fill="#dcdcdc" stroke="none"/>
 <path d="M906 535.5 H916.4" stroke="#535353" stroke-width="0.7"/>
 <path d="M933 532.7 H937.8 V541.8 H932.5 L929.6 538.9 V536" stroke="#dcdcdc" stroke-width="1"/>
 <path d="M929.6 535.5 H933 V532.7" stroke="#dcdcdc" stroke-width="1.2"/><rect x="929.4" y="535.3" width="3.8" height="3.6" fill="#dcdcdc" stroke="none"/>
 <path d="M952 534 H960.4 M954.5 534 V532.6 H957.8 V534 M953 534.5 V542 H959.4 V534.5 M955 536 V540.5 M957.3 536 V540.5" stroke="#d8d8d8" stroke-width="1"/>
 <g fill="#3e3e3e"><rect x="874" y="550" width="1" height="3"/><rect x="877" y="550" width="1" height="3"/><rect x="880" y="550" width="1" height="3"/><rect x="883" y="550" width="1" height="3"/><rect x="886" y="550" width="1" height="3"/><rect x="889" y="550" width="1" height="3"/></g>
</svg>

</body></html>
